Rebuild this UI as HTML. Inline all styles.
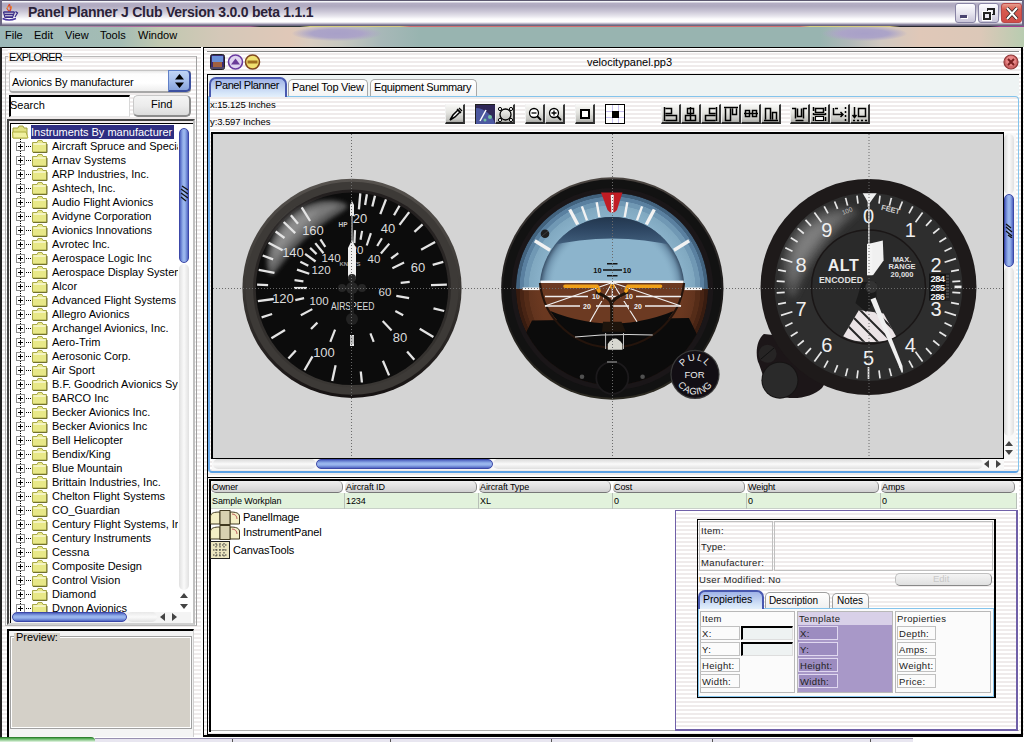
<!DOCTYPE html><html><head><meta charset='utf-8'><style>
*{margin:0;padding:0;box-sizing:border-box}
html,body{width:1024px;height:742px;overflow:hidden;background:#fff}
body{position:relative;font-family:'Liberation Sans',sans-serif;font-size:11px;color:#000}
.a{position:absolute}
.t{position:absolute;white-space:pre;line-height:1}
.stripe{background:repeating-linear-gradient(180deg,#ffffff 0px,#ffffff 2px,#efebeb 2px,#efebeb 4px)}
.btn{position:absolute;width:20px;height:20px;background:linear-gradient(180deg,#f6f6f4 0%,#e4e4e0 45%,#c4c4c0 85%,#a8a8a4 100%);border-right:2px solid #383838;border-bottom:2px solid #282828;border-left:1px solid #f0f0f0;border-top:1px solid #f8f8f8}
</style></head><body><div class='a' style='left:0;top:0;width:1024px;height:26px;background:linear-gradient(180deg,#5c5870 0px,#5c5870 1px,#f4f4f8 1px,#f4f4f8 2px,#b4aec4 3px,#b0aac0 6px,#c8c4d4 11px,#e6e4ec 16px,#fcfcfd 19px,#ffffff 22px,#c0bccc 23.5px,#8c88a0 24.5px,#5c5870 26px);'></div><div class='a' style='left:0;top:0;width:2px;height:26px;background:#6c6884'></div><div class='a' style='left:1022px;top:0;width:2px;height:26px;background:#6c6884'></div><svg class='a' style='left:0;top:0' width='22' height='22' viewBox='0 0 22 22'>
<path d='M9.5 4 L7 8.5 L9 11.5 M9.5 4 L10.5 9 L9.5 11.5 M11.5 6.5 L10.5 10 L10 11.5' stroke='#d84830' stroke-width='1.2' fill='none'/>
<path d='M8 6 L7 9 M11.5 6 L11 9' stroke='#f0a030' stroke-width='0.8' fill='none'/>
<path d='M3.5 12 L14.5 12 M4.5 14.5 L13.5 14.5 M5.5 17 L12.5 17' stroke='#3a2c88' stroke-width='1.5' fill='none'/>
<path d='M3.5 12 L5 17.5 L12.5 17.5 L14.5 12' stroke='#3a2c88' stroke-width='1.2' fill='none'/>
<path d='M15.5 11.5 L17.5 13 L15 17' stroke='#3a2c88' stroke-width='1.3' fill='none'/>
<path d='M2.5 18.5 Q9 21.5 16 18.5' stroke='#4a38a0' stroke-width='1.4' fill='none'/>
</svg><div class='t' style='left:28px;top:5px;font-size:14px;letter-spacing:-0.25px;font-weight:bold;color:#2a2238'>Panel Planner J Club Version 3.0.0 beta 1.1.1</div><div class='a' style='left:955px;top:3px;width:21px;height:20px;border:1px solid #8884a4;border-radius:3px;background:linear-gradient(180deg,#fdfdff 0%,#e8e6f0 50%,#c8c4d8 100%)'><div class='a' style='left:4px;top:11px;width:7px;height:3px;background:#4a4470;box-shadow:1px 1px 0 #fff'></div></div><div class='a' style='left:978px;top:3px;width:21px;height:20px;border:1px solid #8884a4;border-radius:3px;background:linear-gradient(180deg,#fdfdff 0%,#e8e6f0 50%,#c8c4d8 100%)'><div class='a' style='left:8px;top:4px;width:8px;height:7px;border:2px solid #222;border-left-width:1px;border-bottom-width:1px'></div><div class='a' style='left:4px;top:8px;width:8px;height:8px;border:2px solid #222;background:#e8e6f0;box-shadow:0 0 0 1px #fff'></div></div><div class='a' style='left:1001px;top:3px;width:21px;height:20px;border:1px solid #b84848;border-radius:3px;background:linear-gradient(180deg,#e8a090 0%,#d85c50 30%,#d04c48 100%)'><svg class='a' style='left:3px;top:3px' width='14' height='13'><path d='M2 1 L12 12 M12 1 L2 12' stroke='#222' stroke-width='3.4'/><path d='M2 1 L12 12 M12 1 L2 12' stroke='#fff' stroke-width='2'/></svg></div><div class='a' style='left:0;top:26px;width:1024px;height:21px;background:linear-gradient(90deg,#9cb8b8 0px,#a4bcb4 120px,#c0c8b0 160px,#d4c8b8 220px,#e0c8b8 290px,#d8ccc0 310px,#c8c8c0 340px,#a8b8b8 380px,#98b4b0 420px,#98b4b0 820px,#b0b8b8 850px,#d0c8c0 880px,#e0c8b8 920px,#dcc8b8 980px,#b8ccb0 1024px)'></div><div class='a' style='left:292px;top:26px;width:90px;height:15px;border-radius:50%;background:radial-gradient(ellipse at center,#a8a0c8 0%,#aca4c8 40%,rgba(168,160,200,0) 72%)'></div><div class='a' style='left:822px;top:26px;width:85px;height:15px;border-radius:50%;background:radial-gradient(ellipse at center,#a8a0c8 0%,#aca4c8 40%,rgba(168,160,200,0) 72%)'></div><div class='a' style='left:0;top:26px;width:1024px;height:1px;background:linear-gradient(90deg,#a0b0b0 0px,#b070a0 130px,#a05890 250px,#303838 260px,#303838 300px,#d8d080 310px,#d8c880 400px,#d07070 410px,#d07070 800px,#d8d080 810px,#d8c880 890px,#282830 900px,#282830 990px,#a04090 1000px,#a04090 1024px)'></div><div class='t' style='left:5px;top:30px;font-size:11px;color:#000'>File</div><div class='t' style='left:34px;top:30px;font-size:11px;color:#000'>Edit</div><div class='t' style='left:65px;top:30px;font-size:11px;color:#000'>View</div><div class='t' style='left:100px;top:30px;font-size:11px;color:#000'>Tools</div><div class='t' style='left:138px;top:30px;font-size:11px;color:#000'>Window</div><div class='a stripe' style='left:0;top:47px;width:203px;height:695px'></div><div class='a' style='left:0;top:47px;width:201px;height:1px;background:#000'></div><div class='a' style='left:0;top:47px;width:2px;height:690px;background:#222'></div><div class='a' style='left:201px;top:47px;width:2px;height:695px;background:#fff'></div><div class='a' style='left:5px;top:56px;width:192px;height:570px;border:1px solid #b8b8b8;border-right-color:#a0a0a0'></div><div class='a stripe' style='left:8px;top:50px;width:55px;height:12px'></div><div class='t' style='left:9px;top:52px;font-size:11px;letter-spacing:-0.9px;color:#000'>EXPLORER</div><div class='a' style='left:9px;top:70px;width:182px;height:23px;border-radius:4px;background:linear-gradient(180deg,#e8e8e8 0,#fdfdfd 3px,#ffffff 60%,#eeeeee 100%);border:1px solid #c4c4c4;border-bottom:2px solid #a8a8a8;border-right:2px solid #909090'></div><div class='a' style='left:168px;top:70px;width:23px;height:22px;border-radius:0 5px 5px 0;background:linear-gradient(180deg,#c0d4f4 0%,#a8c0ec 50%,#88a4dc 100%);border:1px solid #6080c8;border-right:2px solid #3c50a0;border-bottom:2px solid #3c50a0'></div><svg class='a' style='left:174px;top:73px' width='11' height='16'><path d='M5.5 1 L10 6.5 L1 6.5 Z M1 9.5 L10 9.5 L5.5 15 Z' fill='#000'/></svg><div class='t' style='left:12px;top:77px;font-size:11px;letter-spacing:-0.12px'>Avionics By manufacturer</div><div class='a' style='left:9px;top:95px;width:121px;height:22px;background:#fff;border-top:2px solid #000;border-left:2px solid #000;border-right:1px solid #d8d8d8;border-bottom:1px solid #e8e8e8'></div><div class='t' style='left:10px;top:100px;font-size:11px'>Search</div><div class='a' style='left:133px;top:95px;width:58px;height:22px;border-radius:5px;background:linear-gradient(180deg,#f4f4f4 0%,#ececec 50%,#dcdcdc 100%);border:1px solid #c8c8c8;border-right:2px solid #8c8c8c;border-bottom:2px solid #8c8c8c'></div><div class='t' style='left:151px;top:99px;font-size:11px'>Find</div><div class='a' style='left:7px;top:119px;width:188px;height:506px;border:2px solid #444;border-right-color:#c0c0c0;border-bottom-color:#d0d0d0'></div><div class='a' style='left:10px;top:123px;width:183px;height:500px;background:#fff;border-top:1px solid #000;border-left:1px solid #000'></div><svg class='a' style='left:12px;top:125px' width='17' height='14'><path d='M1 3 L6 3 L7 1 L11 1 L12 3 L15 3 L15 13 L1 13 Z' fill='#e0e080' stroke='#a0a040'/><path d='M0.5 7 L14 7 L16 13 L1 13 Z' fill='#f0f0a0' stroke='#b0b040'/></svg><div class='a' style='left:31px;top:125px;width:143px;height:14px;background:#2e2e82'></div><div class='t' style='left:31px;top:127px;font-size:11px;color:#fff'>Instruments By manufacturer</div><div class='a' style='left:11px;top:124px;width:167px;height:488px;overflow:hidden'><div class='a' style='left:9px;top:15px;width:1px;height:480px;background:repeating-linear-gradient(180deg,#000 0,#000 1px,transparent 1px,transparent 2px)'></div><div class='a' style='left:5px;top:18px;width:9px;height:9px;border:1px solid #909090;background:#fff'></div><div class='a' style='left:7px;top:22px;width:5px;height:1px;background:#000'></div><div class='a' style='left:9px;top:20px;width:1px;height:5px;background:#000'></div><div class='a' style='left:15px;top:22px;width:6px;height:1px;background:repeating-linear-gradient(90deg,#000 0,#000 1px,transparent 1px,transparent 2px)'></div><svg class='a' style='left:21px;top:16px' width='16' height='13'><path d='M0.5 2.5 L5 2.5 L6 0.5 L10 0.5 L11 2.5 L14.5 2.5 L14.5 12 L0.5 12 Z' fill='#e8e888' stroke='#a8a848'/><path d='M1.5 4 L13.5 4' stroke='#fff' stroke-width='1'/><path d='M15 4 L15 12.5 L1 12.5' stroke='#707030' fill='none'/></svg><div class='t' style='left:41px;top:17px;font-size:11px'>Aircraft Spruce and Specia</div><div class='a' style='left:5px;top:32px;width:9px;height:9px;border:1px solid #909090;background:#fff'></div><div class='a' style='left:7px;top:36px;width:5px;height:1px;background:#000'></div><div class='a' style='left:9px;top:34px;width:1px;height:5px;background:#000'></div><div class='a' style='left:15px;top:36px;width:6px;height:1px;background:repeating-linear-gradient(90deg,#000 0,#000 1px,transparent 1px,transparent 2px)'></div><svg class='a' style='left:21px;top:30px' width='16' height='13'><path d='M0.5 2.5 L5 2.5 L6 0.5 L10 0.5 L11 2.5 L14.5 2.5 L14.5 12 L0.5 12 Z' fill='#e8e888' stroke='#a8a848'/><path d='M1.5 4 L13.5 4' stroke='#fff' stroke-width='1'/><path d='M15 4 L15 12.5 L1 12.5' stroke='#707030' fill='none'/></svg><div class='t' style='left:41px;top:31px;font-size:11px'>Arnav Systems</div><div class='a' style='left:5px;top:46px;width:9px;height:9px;border:1px solid #909090;background:#fff'></div><div class='a' style='left:7px;top:50px;width:5px;height:1px;background:#000'></div><div class='a' style='left:9px;top:48px;width:1px;height:5px;background:#000'></div><div class='a' style='left:15px;top:50px;width:6px;height:1px;background:repeating-linear-gradient(90deg,#000 0,#000 1px,transparent 1px,transparent 2px)'></div><svg class='a' style='left:21px;top:44px' width='16' height='13'><path d='M0.5 2.5 L5 2.5 L6 0.5 L10 0.5 L11 2.5 L14.5 2.5 L14.5 12 L0.5 12 Z' fill='#e8e888' stroke='#a8a848'/><path d='M1.5 4 L13.5 4' stroke='#fff' stroke-width='1'/><path d='M15 4 L15 12.5 L1 12.5' stroke='#707030' fill='none'/></svg><div class='t' style='left:41px;top:45px;font-size:11px'>ARP Industries, Inc.</div><div class='a' style='left:5px;top:60px;width:9px;height:9px;border:1px solid #909090;background:#fff'></div><div class='a' style='left:7px;top:64px;width:5px;height:1px;background:#000'></div><div class='a' style='left:9px;top:62px;width:1px;height:5px;background:#000'></div><div class='a' style='left:15px;top:64px;width:6px;height:1px;background:repeating-linear-gradient(90deg,#000 0,#000 1px,transparent 1px,transparent 2px)'></div><svg class='a' style='left:21px;top:58px' width='16' height='13'><path d='M0.5 2.5 L5 2.5 L6 0.5 L10 0.5 L11 2.5 L14.5 2.5 L14.5 12 L0.5 12 Z' fill='#e8e888' stroke='#a8a848'/><path d='M1.5 4 L13.5 4' stroke='#fff' stroke-width='1'/><path d='M15 4 L15 12.5 L1 12.5' stroke='#707030' fill='none'/></svg><div class='t' style='left:41px;top:59px;font-size:11px'>Ashtech, Inc.</div><div class='a' style='left:5px;top:74px;width:9px;height:9px;border:1px solid #909090;background:#fff'></div><div class='a' style='left:7px;top:78px;width:5px;height:1px;background:#000'></div><div class='a' style='left:9px;top:76px;width:1px;height:5px;background:#000'></div><div class='a' style='left:15px;top:78px;width:6px;height:1px;background:repeating-linear-gradient(90deg,#000 0,#000 1px,transparent 1px,transparent 2px)'></div><svg class='a' style='left:21px;top:72px' width='16' height='13'><path d='M0.5 2.5 L5 2.5 L6 0.5 L10 0.5 L11 2.5 L14.5 2.5 L14.5 12 L0.5 12 Z' fill='#e8e888' stroke='#a8a848'/><path d='M1.5 4 L13.5 4' stroke='#fff' stroke-width='1'/><path d='M15 4 L15 12.5 L1 12.5' stroke='#707030' fill='none'/></svg><div class='t' style='left:41px;top:73px;font-size:11px'>Audio Flight Avionics</div><div class='a' style='left:5px;top:88px;width:9px;height:9px;border:1px solid #909090;background:#fff'></div><div class='a' style='left:7px;top:92px;width:5px;height:1px;background:#000'></div><div class='a' style='left:9px;top:90px;width:1px;height:5px;background:#000'></div><div class='a' style='left:15px;top:92px;width:6px;height:1px;background:repeating-linear-gradient(90deg,#000 0,#000 1px,transparent 1px,transparent 2px)'></div><svg class='a' style='left:21px;top:86px' width='16' height='13'><path d='M0.5 2.5 L5 2.5 L6 0.5 L10 0.5 L11 2.5 L14.5 2.5 L14.5 12 L0.5 12 Z' fill='#e8e888' stroke='#a8a848'/><path d='M1.5 4 L13.5 4' stroke='#fff' stroke-width='1'/><path d='M15 4 L15 12.5 L1 12.5' stroke='#707030' fill='none'/></svg><div class='t' style='left:41px;top:87px;font-size:11px'>Avidyne Corporation</div><div class='a' style='left:5px;top:102px;width:9px;height:9px;border:1px solid #909090;background:#fff'></div><div class='a' style='left:7px;top:106px;width:5px;height:1px;background:#000'></div><div class='a' style='left:9px;top:104px;width:1px;height:5px;background:#000'></div><div class='a' style='left:15px;top:106px;width:6px;height:1px;background:repeating-linear-gradient(90deg,#000 0,#000 1px,transparent 1px,transparent 2px)'></div><svg class='a' style='left:21px;top:100px' width='16' height='13'><path d='M0.5 2.5 L5 2.5 L6 0.5 L10 0.5 L11 2.5 L14.5 2.5 L14.5 12 L0.5 12 Z' fill='#e8e888' stroke='#a8a848'/><path d='M1.5 4 L13.5 4' stroke='#fff' stroke-width='1'/><path d='M15 4 L15 12.5 L1 12.5' stroke='#707030' fill='none'/></svg><div class='t' style='left:41px;top:101px;font-size:11px'>Avionics Innovations</div><div class='a' style='left:5px;top:116px;width:9px;height:9px;border:1px solid #909090;background:#fff'></div><div class='a' style='left:7px;top:120px;width:5px;height:1px;background:#000'></div><div class='a' style='left:9px;top:118px;width:1px;height:5px;background:#000'></div><div class='a' style='left:15px;top:120px;width:6px;height:1px;background:repeating-linear-gradient(90deg,#000 0,#000 1px,transparent 1px,transparent 2px)'></div><svg class='a' style='left:21px;top:114px' width='16' height='13'><path d='M0.5 2.5 L5 2.5 L6 0.5 L10 0.5 L11 2.5 L14.5 2.5 L14.5 12 L0.5 12 Z' fill='#e8e888' stroke='#a8a848'/><path d='M1.5 4 L13.5 4' stroke='#fff' stroke-width='1'/><path d='M15 4 L15 12.5 L1 12.5' stroke='#707030' fill='none'/></svg><div class='t' style='left:41px;top:115px;font-size:11px'>Avrotec Inc.</div><div class='a' style='left:5px;top:130px;width:9px;height:9px;border:1px solid #909090;background:#fff'></div><div class='a' style='left:7px;top:134px;width:5px;height:1px;background:#000'></div><div class='a' style='left:9px;top:132px;width:1px;height:5px;background:#000'></div><div class='a' style='left:15px;top:134px;width:6px;height:1px;background:repeating-linear-gradient(90deg,#000 0,#000 1px,transparent 1px,transparent 2px)'></div><svg class='a' style='left:21px;top:128px' width='16' height='13'><path d='M0.5 2.5 L5 2.5 L6 0.5 L10 0.5 L11 2.5 L14.5 2.5 L14.5 12 L0.5 12 Z' fill='#e8e888' stroke='#a8a848'/><path d='M1.5 4 L13.5 4' stroke='#fff' stroke-width='1'/><path d='M15 4 L15 12.5 L1 12.5' stroke='#707030' fill='none'/></svg><div class='t' style='left:41px;top:129px;font-size:11px'>Aerospace Logic Inc</div><div class='a' style='left:5px;top:144px;width:9px;height:9px;border:1px solid #909090;background:#fff'></div><div class='a' style='left:7px;top:148px;width:5px;height:1px;background:#000'></div><div class='a' style='left:9px;top:146px;width:1px;height:5px;background:#000'></div><div class='a' style='left:15px;top:148px;width:6px;height:1px;background:repeating-linear-gradient(90deg,#000 0,#000 1px,transparent 1px,transparent 2px)'></div><svg class='a' style='left:21px;top:142px' width='16' height='13'><path d='M0.5 2.5 L5 2.5 L6 0.5 L10 0.5 L11 2.5 L14.5 2.5 L14.5 12 L0.5 12 Z' fill='#e8e888' stroke='#a8a848'/><path d='M1.5 4 L13.5 4' stroke='#fff' stroke-width='1'/><path d='M15 4 L15 12.5 L1 12.5' stroke='#707030' fill='none'/></svg><div class='t' style='left:41px;top:143px;font-size:11px'>Aerospace Display Systems</div><div class='a' style='left:5px;top:158px;width:9px;height:9px;border:1px solid #909090;background:#fff'></div><div class='a' style='left:7px;top:162px;width:5px;height:1px;background:#000'></div><div class='a' style='left:9px;top:160px;width:1px;height:5px;background:#000'></div><div class='a' style='left:15px;top:162px;width:6px;height:1px;background:repeating-linear-gradient(90deg,#000 0,#000 1px,transparent 1px,transparent 2px)'></div><svg class='a' style='left:21px;top:156px' width='16' height='13'><path d='M0.5 2.5 L5 2.5 L6 0.5 L10 0.5 L11 2.5 L14.5 2.5 L14.5 12 L0.5 12 Z' fill='#e8e888' stroke='#a8a848'/><path d='M1.5 4 L13.5 4' stroke='#fff' stroke-width='1'/><path d='M15 4 L15 12.5 L1 12.5' stroke='#707030' fill='none'/></svg><div class='t' style='left:41px;top:157px;font-size:11px'>Alcor</div><div class='a' style='left:5px;top:172px;width:9px;height:9px;border:1px solid #909090;background:#fff'></div><div class='a' style='left:7px;top:176px;width:5px;height:1px;background:#000'></div><div class='a' style='left:9px;top:174px;width:1px;height:5px;background:#000'></div><div class='a' style='left:15px;top:176px;width:6px;height:1px;background:repeating-linear-gradient(90deg,#000 0,#000 1px,transparent 1px,transparent 2px)'></div><svg class='a' style='left:21px;top:170px' width='16' height='13'><path d='M0.5 2.5 L5 2.5 L6 0.5 L10 0.5 L11 2.5 L14.5 2.5 L14.5 12 L0.5 12 Z' fill='#e8e888' stroke='#a8a848'/><path d='M1.5 4 L13.5 4' stroke='#fff' stroke-width='1'/><path d='M15 4 L15 12.5 L1 12.5' stroke='#707030' fill='none'/></svg><div class='t' style='left:41px;top:171px;font-size:11px'>Advanced Flight Systems</div><div class='a' style='left:5px;top:186px;width:9px;height:9px;border:1px solid #909090;background:#fff'></div><div class='a' style='left:7px;top:190px;width:5px;height:1px;background:#000'></div><div class='a' style='left:9px;top:188px;width:1px;height:5px;background:#000'></div><div class='a' style='left:15px;top:190px;width:6px;height:1px;background:repeating-linear-gradient(90deg,#000 0,#000 1px,transparent 1px,transparent 2px)'></div><svg class='a' style='left:21px;top:184px' width='16' height='13'><path d='M0.5 2.5 L5 2.5 L6 0.5 L10 0.5 L11 2.5 L14.5 2.5 L14.5 12 L0.5 12 Z' fill='#e8e888' stroke='#a8a848'/><path d='M1.5 4 L13.5 4' stroke='#fff' stroke-width='1'/><path d='M15 4 L15 12.5 L1 12.5' stroke='#707030' fill='none'/></svg><div class='t' style='left:41px;top:185px;font-size:11px'>Allegro Avionics</div><div class='a' style='left:5px;top:200px;width:9px;height:9px;border:1px solid #909090;background:#fff'></div><div class='a' style='left:7px;top:204px;width:5px;height:1px;background:#000'></div><div class='a' style='left:9px;top:202px;width:1px;height:5px;background:#000'></div><div class='a' style='left:15px;top:204px;width:6px;height:1px;background:repeating-linear-gradient(90deg,#000 0,#000 1px,transparent 1px,transparent 2px)'></div><svg class='a' style='left:21px;top:198px' width='16' height='13'><path d='M0.5 2.5 L5 2.5 L6 0.5 L10 0.5 L11 2.5 L14.5 2.5 L14.5 12 L0.5 12 Z' fill='#e8e888' stroke='#a8a848'/><path d='M1.5 4 L13.5 4' stroke='#fff' stroke-width='1'/><path d='M15 4 L15 12.5 L1 12.5' stroke='#707030' fill='none'/></svg><div class='t' style='left:41px;top:199px;font-size:11px'>Archangel Avionics, Inc.</div><div class='a' style='left:5px;top:214px;width:9px;height:9px;border:1px solid #909090;background:#fff'></div><div class='a' style='left:7px;top:218px;width:5px;height:1px;background:#000'></div><div class='a' style='left:9px;top:216px;width:1px;height:5px;background:#000'></div><div class='a' style='left:15px;top:218px;width:6px;height:1px;background:repeating-linear-gradient(90deg,#000 0,#000 1px,transparent 1px,transparent 2px)'></div><svg class='a' style='left:21px;top:212px' width='16' height='13'><path d='M0.5 2.5 L5 2.5 L6 0.5 L10 0.5 L11 2.5 L14.5 2.5 L14.5 12 L0.5 12 Z' fill='#e8e888' stroke='#a8a848'/><path d='M1.5 4 L13.5 4' stroke='#fff' stroke-width='1'/><path d='M15 4 L15 12.5 L1 12.5' stroke='#707030' fill='none'/></svg><div class='t' style='left:41px;top:213px;font-size:11px'>Aero-Trim</div><div class='a' style='left:5px;top:228px;width:9px;height:9px;border:1px solid #909090;background:#fff'></div><div class='a' style='left:7px;top:232px;width:5px;height:1px;background:#000'></div><div class='a' style='left:9px;top:230px;width:1px;height:5px;background:#000'></div><div class='a' style='left:15px;top:232px;width:6px;height:1px;background:repeating-linear-gradient(90deg,#000 0,#000 1px,transparent 1px,transparent 2px)'></div><svg class='a' style='left:21px;top:226px' width='16' height='13'><path d='M0.5 2.5 L5 2.5 L6 0.5 L10 0.5 L11 2.5 L14.5 2.5 L14.5 12 L0.5 12 Z' fill='#e8e888' stroke='#a8a848'/><path d='M1.5 4 L13.5 4' stroke='#fff' stroke-width='1'/><path d='M15 4 L15 12.5 L1 12.5' stroke='#707030' fill='none'/></svg><div class='t' style='left:41px;top:227px;font-size:11px'>Aerosonic Corp.</div><div class='a' style='left:5px;top:242px;width:9px;height:9px;border:1px solid #909090;background:#fff'></div><div class='a' style='left:7px;top:246px;width:5px;height:1px;background:#000'></div><div class='a' style='left:9px;top:244px;width:1px;height:5px;background:#000'></div><div class='a' style='left:15px;top:246px;width:6px;height:1px;background:repeating-linear-gradient(90deg,#000 0,#000 1px,transparent 1px,transparent 2px)'></div><svg class='a' style='left:21px;top:240px' width='16' height='13'><path d='M0.5 2.5 L5 2.5 L6 0.5 L10 0.5 L11 2.5 L14.5 2.5 L14.5 12 L0.5 12 Z' fill='#e8e888' stroke='#a8a848'/><path d='M1.5 4 L13.5 4' stroke='#fff' stroke-width='1'/><path d='M15 4 L15 12.5 L1 12.5' stroke='#707030' fill='none'/></svg><div class='t' style='left:41px;top:241px;font-size:11px'>Air Sport</div><div class='a' style='left:5px;top:256px;width:9px;height:9px;border:1px solid #909090;background:#fff'></div><div class='a' style='left:7px;top:260px;width:5px;height:1px;background:#000'></div><div class='a' style='left:9px;top:258px;width:1px;height:5px;background:#000'></div><div class='a' style='left:15px;top:260px;width:6px;height:1px;background:repeating-linear-gradient(90deg,#000 0,#000 1px,transparent 1px,transparent 2px)'></div><svg class='a' style='left:21px;top:254px' width='16' height='13'><path d='M0.5 2.5 L5 2.5 L6 0.5 L10 0.5 L11 2.5 L14.5 2.5 L14.5 12 L0.5 12 Z' fill='#e8e888' stroke='#a8a848'/><path d='M1.5 4 L13.5 4' stroke='#fff' stroke-width='1'/><path d='M15 4 L15 12.5 L1 12.5' stroke='#707030' fill='none'/></svg><div class='t' style='left:41px;top:255px;font-size:11px'>B.F. Goodrich Avionics Sys</div><div class='a' style='left:5px;top:270px;width:9px;height:9px;border:1px solid #909090;background:#fff'></div><div class='a' style='left:7px;top:274px;width:5px;height:1px;background:#000'></div><div class='a' style='left:9px;top:272px;width:1px;height:5px;background:#000'></div><div class='a' style='left:15px;top:274px;width:6px;height:1px;background:repeating-linear-gradient(90deg,#000 0,#000 1px,transparent 1px,transparent 2px)'></div><svg class='a' style='left:21px;top:268px' width='16' height='13'><path d='M0.5 2.5 L5 2.5 L6 0.5 L10 0.5 L11 2.5 L14.5 2.5 L14.5 12 L0.5 12 Z' fill='#e8e888' stroke='#a8a848'/><path d='M1.5 4 L13.5 4' stroke='#fff' stroke-width='1'/><path d='M15 4 L15 12.5 L1 12.5' stroke='#707030' fill='none'/></svg><div class='t' style='left:41px;top:269px;font-size:11px'>BARCO Inc</div><div class='a' style='left:5px;top:284px;width:9px;height:9px;border:1px solid #909090;background:#fff'></div><div class='a' style='left:7px;top:288px;width:5px;height:1px;background:#000'></div><div class='a' style='left:9px;top:286px;width:1px;height:5px;background:#000'></div><div class='a' style='left:15px;top:288px;width:6px;height:1px;background:repeating-linear-gradient(90deg,#000 0,#000 1px,transparent 1px,transparent 2px)'></div><svg class='a' style='left:21px;top:282px' width='16' height='13'><path d='M0.5 2.5 L5 2.5 L6 0.5 L10 0.5 L11 2.5 L14.5 2.5 L14.5 12 L0.5 12 Z' fill='#e8e888' stroke='#a8a848'/><path d='M1.5 4 L13.5 4' stroke='#fff' stroke-width='1'/><path d='M15 4 L15 12.5 L1 12.5' stroke='#707030' fill='none'/></svg><div class='t' style='left:41px;top:283px;font-size:11px'>Becker Avionics Inc.</div><div class='a' style='left:5px;top:298px;width:9px;height:9px;border:1px solid #909090;background:#fff'></div><div class='a' style='left:7px;top:302px;width:5px;height:1px;background:#000'></div><div class='a' style='left:9px;top:300px;width:1px;height:5px;background:#000'></div><div class='a' style='left:15px;top:302px;width:6px;height:1px;background:repeating-linear-gradient(90deg,#000 0,#000 1px,transparent 1px,transparent 2px)'></div><svg class='a' style='left:21px;top:296px' width='16' height='13'><path d='M0.5 2.5 L5 2.5 L6 0.5 L10 0.5 L11 2.5 L14.5 2.5 L14.5 12 L0.5 12 Z' fill='#e8e888' stroke='#a8a848'/><path d='M1.5 4 L13.5 4' stroke='#fff' stroke-width='1'/><path d='M15 4 L15 12.5 L1 12.5' stroke='#707030' fill='none'/></svg><div class='t' style='left:41px;top:297px;font-size:11px'>Becker Avionics Inc</div><div class='a' style='left:5px;top:312px;width:9px;height:9px;border:1px solid #909090;background:#fff'></div><div class='a' style='left:7px;top:316px;width:5px;height:1px;background:#000'></div><div class='a' style='left:9px;top:314px;width:1px;height:5px;background:#000'></div><div class='a' style='left:15px;top:316px;width:6px;height:1px;background:repeating-linear-gradient(90deg,#000 0,#000 1px,transparent 1px,transparent 2px)'></div><svg class='a' style='left:21px;top:310px' width='16' height='13'><path d='M0.5 2.5 L5 2.5 L6 0.5 L10 0.5 L11 2.5 L14.5 2.5 L14.5 12 L0.5 12 Z' fill='#e8e888' stroke='#a8a848'/><path d='M1.5 4 L13.5 4' stroke='#fff' stroke-width='1'/><path d='M15 4 L15 12.5 L1 12.5' stroke='#707030' fill='none'/></svg><div class='t' style='left:41px;top:311px;font-size:11px'>Bell Helicopter</div><div class='a' style='left:5px;top:326px;width:9px;height:9px;border:1px solid #909090;background:#fff'></div><div class='a' style='left:7px;top:330px;width:5px;height:1px;background:#000'></div><div class='a' style='left:9px;top:328px;width:1px;height:5px;background:#000'></div><div class='a' style='left:15px;top:330px;width:6px;height:1px;background:repeating-linear-gradient(90deg,#000 0,#000 1px,transparent 1px,transparent 2px)'></div><svg class='a' style='left:21px;top:324px' width='16' height='13'><path d='M0.5 2.5 L5 2.5 L6 0.5 L10 0.5 L11 2.5 L14.5 2.5 L14.5 12 L0.5 12 Z' fill='#e8e888' stroke='#a8a848'/><path d='M1.5 4 L13.5 4' stroke='#fff' stroke-width='1'/><path d='M15 4 L15 12.5 L1 12.5' stroke='#707030' fill='none'/></svg><div class='t' style='left:41px;top:325px;font-size:11px'>Bendix/King</div><div class='a' style='left:5px;top:340px;width:9px;height:9px;border:1px solid #909090;background:#fff'></div><div class='a' style='left:7px;top:344px;width:5px;height:1px;background:#000'></div><div class='a' style='left:9px;top:342px;width:1px;height:5px;background:#000'></div><div class='a' style='left:15px;top:344px;width:6px;height:1px;background:repeating-linear-gradient(90deg,#000 0,#000 1px,transparent 1px,transparent 2px)'></div><svg class='a' style='left:21px;top:338px' width='16' height='13'><path d='M0.5 2.5 L5 2.5 L6 0.5 L10 0.5 L11 2.5 L14.5 2.5 L14.5 12 L0.5 12 Z' fill='#e8e888' stroke='#a8a848'/><path d='M1.5 4 L13.5 4' stroke='#fff' stroke-width='1'/><path d='M15 4 L15 12.5 L1 12.5' stroke='#707030' fill='none'/></svg><div class='t' style='left:41px;top:339px;font-size:11px'>Blue Mountain</div><div class='a' style='left:5px;top:354px;width:9px;height:9px;border:1px solid #909090;background:#fff'></div><div class='a' style='left:7px;top:358px;width:5px;height:1px;background:#000'></div><div class='a' style='left:9px;top:356px;width:1px;height:5px;background:#000'></div><div class='a' style='left:15px;top:358px;width:6px;height:1px;background:repeating-linear-gradient(90deg,#000 0,#000 1px,transparent 1px,transparent 2px)'></div><svg class='a' style='left:21px;top:352px' width='16' height='13'><path d='M0.5 2.5 L5 2.5 L6 0.5 L10 0.5 L11 2.5 L14.5 2.5 L14.5 12 L0.5 12 Z' fill='#e8e888' stroke='#a8a848'/><path d='M1.5 4 L13.5 4' stroke='#fff' stroke-width='1'/><path d='M15 4 L15 12.5 L1 12.5' stroke='#707030' fill='none'/></svg><div class='t' style='left:41px;top:353px;font-size:11px'>Brittain Industries, Inc.</div><div class='a' style='left:5px;top:368px;width:9px;height:9px;border:1px solid #909090;background:#fff'></div><div class='a' style='left:7px;top:372px;width:5px;height:1px;background:#000'></div><div class='a' style='left:9px;top:370px;width:1px;height:5px;background:#000'></div><div class='a' style='left:15px;top:372px;width:6px;height:1px;background:repeating-linear-gradient(90deg,#000 0,#000 1px,transparent 1px,transparent 2px)'></div><svg class='a' style='left:21px;top:366px' width='16' height='13'><path d='M0.5 2.5 L5 2.5 L6 0.5 L10 0.5 L11 2.5 L14.5 2.5 L14.5 12 L0.5 12 Z' fill='#e8e888' stroke='#a8a848'/><path d='M1.5 4 L13.5 4' stroke='#fff' stroke-width='1'/><path d='M15 4 L15 12.5 L1 12.5' stroke='#707030' fill='none'/></svg><div class='t' style='left:41px;top:367px;font-size:11px'>Chelton Flight Systems</div><div class='a' style='left:5px;top:382px;width:9px;height:9px;border:1px solid #909090;background:#fff'></div><div class='a' style='left:7px;top:386px;width:5px;height:1px;background:#000'></div><div class='a' style='left:9px;top:384px;width:1px;height:5px;background:#000'></div><div class='a' style='left:15px;top:386px;width:6px;height:1px;background:repeating-linear-gradient(90deg,#000 0,#000 1px,transparent 1px,transparent 2px)'></div><svg class='a' style='left:21px;top:380px' width='16' height='13'><path d='M0.5 2.5 L5 2.5 L6 0.5 L10 0.5 L11 2.5 L14.5 2.5 L14.5 12 L0.5 12 Z' fill='#e8e888' stroke='#a8a848'/><path d='M1.5 4 L13.5 4' stroke='#fff' stroke-width='1'/><path d='M15 4 L15 12.5 L1 12.5' stroke='#707030' fill='none'/></svg><div class='t' style='left:41px;top:381px;font-size:11px'>CO_Guardian</div><div class='a' style='left:5px;top:396px;width:9px;height:9px;border:1px solid #909090;background:#fff'></div><div class='a' style='left:7px;top:400px;width:5px;height:1px;background:#000'></div><div class='a' style='left:9px;top:398px;width:1px;height:5px;background:#000'></div><div class='a' style='left:15px;top:400px;width:6px;height:1px;background:repeating-linear-gradient(90deg,#000 0,#000 1px,transparent 1px,transparent 2px)'></div><svg class='a' style='left:21px;top:394px' width='16' height='13'><path d='M0.5 2.5 L5 2.5 L6 0.5 L10 0.5 L11 2.5 L14.5 2.5 L14.5 12 L0.5 12 Z' fill='#e8e888' stroke='#a8a848'/><path d='M1.5 4 L13.5 4' stroke='#fff' stroke-width='1'/><path d='M15 4 L15 12.5 L1 12.5' stroke='#707030' fill='none'/></svg><div class='t' style='left:41px;top:395px;font-size:11px'>Century Flight Systems, In</div><div class='a' style='left:5px;top:410px;width:9px;height:9px;border:1px solid #909090;background:#fff'></div><div class='a' style='left:7px;top:414px;width:5px;height:1px;background:#000'></div><div class='a' style='left:9px;top:412px;width:1px;height:5px;background:#000'></div><div class='a' style='left:15px;top:414px;width:6px;height:1px;background:repeating-linear-gradient(90deg,#000 0,#000 1px,transparent 1px,transparent 2px)'></div><svg class='a' style='left:21px;top:408px' width='16' height='13'><path d='M0.5 2.5 L5 2.5 L6 0.5 L10 0.5 L11 2.5 L14.5 2.5 L14.5 12 L0.5 12 Z' fill='#e8e888' stroke='#a8a848'/><path d='M1.5 4 L13.5 4' stroke='#fff' stroke-width='1'/><path d='M15 4 L15 12.5 L1 12.5' stroke='#707030' fill='none'/></svg><div class='t' style='left:41px;top:409px;font-size:11px'>Century Instruments</div><div class='a' style='left:5px;top:424px;width:9px;height:9px;border:1px solid #909090;background:#fff'></div><div class='a' style='left:7px;top:428px;width:5px;height:1px;background:#000'></div><div class='a' style='left:9px;top:426px;width:1px;height:5px;background:#000'></div><div class='a' style='left:15px;top:428px;width:6px;height:1px;background:repeating-linear-gradient(90deg,#000 0,#000 1px,transparent 1px,transparent 2px)'></div><svg class='a' style='left:21px;top:422px' width='16' height='13'><path d='M0.5 2.5 L5 2.5 L6 0.5 L10 0.5 L11 2.5 L14.5 2.5 L14.5 12 L0.5 12 Z' fill='#e8e888' stroke='#a8a848'/><path d='M1.5 4 L13.5 4' stroke='#fff' stroke-width='1'/><path d='M15 4 L15 12.5 L1 12.5' stroke='#707030' fill='none'/></svg><div class='t' style='left:41px;top:423px;font-size:11px'>Cessna</div><div class='a' style='left:5px;top:438px;width:9px;height:9px;border:1px solid #909090;background:#fff'></div><div class='a' style='left:7px;top:442px;width:5px;height:1px;background:#000'></div><div class='a' style='left:9px;top:440px;width:1px;height:5px;background:#000'></div><div class='a' style='left:15px;top:442px;width:6px;height:1px;background:repeating-linear-gradient(90deg,#000 0,#000 1px,transparent 1px,transparent 2px)'></div><svg class='a' style='left:21px;top:436px' width='16' height='13'><path d='M0.5 2.5 L5 2.5 L6 0.5 L10 0.5 L11 2.5 L14.5 2.5 L14.5 12 L0.5 12 Z' fill='#e8e888' stroke='#a8a848'/><path d='M1.5 4 L13.5 4' stroke='#fff' stroke-width='1'/><path d='M15 4 L15 12.5 L1 12.5' stroke='#707030' fill='none'/></svg><div class='t' style='left:41px;top:437px;font-size:11px'>Composite Design</div><div class='a' style='left:5px;top:452px;width:9px;height:9px;border:1px solid #909090;background:#fff'></div><div class='a' style='left:7px;top:456px;width:5px;height:1px;background:#000'></div><div class='a' style='left:9px;top:454px;width:1px;height:5px;background:#000'></div><div class='a' style='left:15px;top:456px;width:6px;height:1px;background:repeating-linear-gradient(90deg,#000 0,#000 1px,transparent 1px,transparent 2px)'></div><svg class='a' style='left:21px;top:450px' width='16' height='13'><path d='M0.5 2.5 L5 2.5 L6 0.5 L10 0.5 L11 2.5 L14.5 2.5 L14.5 12 L0.5 12 Z' fill='#e8e888' stroke='#a8a848'/><path d='M1.5 4 L13.5 4' stroke='#fff' stroke-width='1'/><path d='M15 4 L15 12.5 L1 12.5' stroke='#707030' fill='none'/></svg><div class='t' style='left:41px;top:451px;font-size:11px'>Control Vision</div><div class='a' style='left:5px;top:466px;width:9px;height:9px;border:1px solid #909090;background:#fff'></div><div class='a' style='left:7px;top:470px;width:5px;height:1px;background:#000'></div><div class='a' style='left:9px;top:468px;width:1px;height:5px;background:#000'></div><div class='a' style='left:15px;top:470px;width:6px;height:1px;background:repeating-linear-gradient(90deg,#000 0,#000 1px,transparent 1px,transparent 2px)'></div><svg class='a' style='left:21px;top:464px' width='16' height='13'><path d='M0.5 2.5 L5 2.5 L6 0.5 L10 0.5 L11 2.5 L14.5 2.5 L14.5 12 L0.5 12 Z' fill='#e8e888' stroke='#a8a848'/><path d='M1.5 4 L13.5 4' stroke='#fff' stroke-width='1'/><path d='M15 4 L15 12.5 L1 12.5' stroke='#707030' fill='none'/></svg><div class='t' style='left:41px;top:465px;font-size:11px'>Diamond</div><div class='a' style='left:5px;top:480px;width:9px;height:9px;border:1px solid #909090;background:#fff'></div><div class='a' style='left:7px;top:484px;width:5px;height:1px;background:#000'></div><div class='a' style='left:9px;top:482px;width:1px;height:5px;background:#000'></div><div class='a' style='left:15px;top:484px;width:6px;height:1px;background:repeating-linear-gradient(90deg,#000 0,#000 1px,transparent 1px,transparent 2px)'></div><svg class='a' style='left:21px;top:478px' width='16' height='13'><path d='M0.5 2.5 L5 2.5 L6 0.5 L10 0.5 L11 2.5 L14.5 2.5 L14.5 12 L0.5 12 Z' fill='#e8e888' stroke='#a8a848'/><path d='M1.5 4 L13.5 4' stroke='#fff' stroke-width='1'/><path d='M15 4 L15 12.5 L1 12.5' stroke='#707030' fill='none'/></svg><div class='t' style='left:41px;top:479px;font-size:11px'>Dynon Avionics</div></div><div class='a' style='left:178px;top:124px;width:13px;height:488px;background:#fff'></div><div class='a' style='left:179px;top:128px;width:10px;height:135px;border-radius:5px;background:linear-gradient(90deg,#5064c0 0%,#88a4e4 30%,#a0bcf0 50%,#88a4e4 70%,#5064c0 100%);border:1px solid #3c48a8'></div><svg class='a' style='left:180px;top:185px' width='8' height='18'><path d='M2 1 L8 5 M1 4 L8 9 M1 8 L8 13 M1 12 L6 16' stroke='#111' stroke-width='1.3'/></svg><div class='a' style='left:179px;top:264px;width:10px;height:326px;border-radius:5px;background:linear-gradient(90deg,#e0e0e0,#fafafa 50%,#e0e0e0)'></div><svg class='a' style='left:178px;top:590px' width='12' height='22'><path d='M2 8 L6 3 L10 8 Z M2 14 L10 14 L6 19 Z' fill='#444'/></svg><div class='a' style='left:11px;top:612px;width:180px;height:11px;background:#f4f4f4'></div><div class='a' style='left:12px;top:612px;width:115px;height:10px;border-radius:6px;background:linear-gradient(180deg,#5064c0 0%,#88a4e4 30%,#a0bcf0 50%,#88a4e4 70%,#5064c0 100%);border:1px solid #3c48a8'></div><div class='a' style='left:127px;top:612px;width:30px;height:10px;border-radius:6px;background:linear-gradient(180deg,#e8e8e8,#fafafa 50%,#e0e0e0)'></div><svg class='a' style='left:158px;top:612px' width='22' height='10'><path d='M2 5 L7 1 L7 9 Z M14 1 L19 5 L14 9 Z' fill='#444'/></svg><div class='a' style='left:7px;top:629px;width:187px;height:109px;border-top:2px solid #000;border-left:2px solid #000;border-right:1px solid #d0d0d0;border-bottom:1px solid #fff;background:#f4f4f4'></div><div class='a' style='left:11px;top:637px;width:180px;height:91px;background:#d4d0c8;border:1px solid #fff;outline:1px solid #a0a0a0'></div><div class='a' style='left:14px;top:633px;width:46px;height:10px;background:#d4d0c8'></div><div class='t' style='left:16px;top:632px;font-size:11px;letter-spacing:-0.05px'>Preview:</div><div class='a stripe' style='left:203px;top:47px;width:821px;height:695px'></div><div class='a' style='left:203px;top:47px;width:820px;height:690px;border:1px solid #000;border-width:1px 2px 2px 1px'></div><div class='a' style='left:207px;top:51px;width:812px;height:1px;background:#888'></div><svg class='a' style='left:210px;top:54px' width='15' height='16'><rect x='0.5' y='0.5' width='14' height='15' rx='2' fill='#3a2a70' stroke='#222'/><rect x='2' y='2' width='11' height='6' fill='#6a90d8'/><rect x='3' y='8' width='9' height='5' fill='#a06040'/><path d='M1 14 L14 14' stroke='#666'/></svg><svg class='a' style='left:227px;top:54px' width='17' height='16'><circle cx='8.5' cy='8' r='7' fill='#e0d4f0' stroke='#6a3aa0' stroke-width='1.6'/><path d='M4 10.5 L8.5 4.5 L13 10.5 Z' fill='#6a3a98'/></svg><svg class='a' style='left:244px;top:54px' width='17' height='16'><circle cx='8.5' cy='8' r='7' fill='#f0e070' stroke='#804820' stroke-width='1.6'/><rect x='3.5' y='6.5' width='10' height='3' fill='#a07020'/></svg><div class='t' style='left:587px;top:57px;font-size:11px'>velocitypanel.pp3</div><svg class='a' style='left:1003px;top:54px' width='16' height='16'><circle cx='8' cy='8' r='7' fill='#d06868' stroke='#903838' stroke-width='1.2'/><circle cx='8' cy='7' r='5' fill='#e88888'/><path d='M5 5 L11 11 M11 5 L5 11' stroke='#7a2020' stroke-width='2'/></svg><div class='a' style='left:207px;top:74px;width:812px;height:1px;background:#000'></div><div class='a' style='left:207px;top:74px;width:1px;height:404px;background:#000'></div><div class='a' style='left:208px;top:75px;width:811px;height:21px;background:#eef3f3'></div><div class='a' style='left:288px;top:79px;width:80px;height:17px;border:1px solid #a8a8a8;border-bottom:none;border-radius:5px 5px 0 0;background:linear-gradient(180deg,#fff,#f4f4f4)'></div><div class='t' style='left:292px;top:82px;font-size:11px;letter-spacing:-0.27px'>Panel Top View</div><div class='a' style='left:370px;top:79px;width:107px;height:17px;border:1px solid #a8a8a8;border-bottom:none;border-radius:5px 5px 0 0;background:linear-gradient(180deg,#fff,#f4f4f4)'></div><div class='t' style='left:374px;top:82px;font-size:11px;letter-spacing:-0.33px'>Equipment Summary</div><div class='a' style='left:208px;top:96px;width:811px;height:377px;border:1px solid #84c4ec;border-left:2px solid #6cacec;border-bottom:2px solid #5aa0e4;border-radius:0 4px 4px 4px'></div><div class='a' style='left:209px;top:77px;width:78px;height:20px;border:2px solid #4858b0;border-bottom:none;border-radius:7px 7px 0 0;background:linear-gradient(180deg,#a0b4e8 0%,#bccdf0 40%,#d4e4f8 75%,#e4f0fc 100%)'></div><div class='t' style='left:215px;top:80px;font-size:11px;letter-spacing:-0.4px'>Panel Planner</div><div class='t' style='left:210px;top:100px;font-size:9.5px;letter-spacing:-0.1px'>x:15.125 Inches</div><div class='t' style='left:210px;top:117px;font-size:9.5px;letter-spacing:-0.1px'>y:3.597 Inches</div><div class='btn' style='left:445px;top:104px'><svg class='a' style='left:2px;top:2px' width='15' height='15'><path d='M2 13 L5 8 L10 3 L12 5 L7 10 Z' fill='#fff' stroke='#000' stroke-width='1.5'/><path d='M9 2 L13 6 M11 1 L14 4' stroke='#000' stroke-width='1.3'/></svg></div><div class='a' style='left:475px;top:104px;width:20px;height:20px;background:#303040;border:1px solid #202020'><svg class='a' style='left:0;top:0' width='19' height='19'><rect width='19' height='19' fill='#302858'/><path d='M0 19 L0 3 C8 3,17 10,19 19 Z' fill='#4c58a0'/><path d='M4 16 L10 5' stroke='#fff' stroke-width='1.5'/><circle cx='14' cy='12' r='2' fill='#70c0a0'/><circle cx='9' cy='15' r='1.5' fill='#70c0a0'/></svg></div><div class='btn' style='left:495px;top:104px'><svg class='a' style='left:1px;top:1px' width='17' height='17'><circle cx='8.5' cy='8.5' r='5.5' fill='none' stroke='#000' stroke-width='1.3'/><circle cx='3' cy='3' r='1.6' fill='#fff' stroke='#000'/><circle cx='14' cy='3' r='1.6' fill='#fff' stroke='#000'/><circle cx='3' cy='14' r='1.6' fill='#fff' stroke='#000'/><circle cx='14' cy='14' r='1.6' fill='#fff' stroke='#000'/></svg></div><div class='btn' style='left:525px;top:104px'><svg class='a' style='left:1px;top:1px' width='17' height='17'><circle cx='7' cy='7' r='4.5' fill='#fff' stroke='#000' stroke-width='1.3'/><path d='M10 10 L14 14' stroke='#000' stroke-width='1.8'/><path d='M4.5 7 L9.5 7' stroke='#000' stroke-width='1.3'/></svg></div><div class='btn' style='left:545px;top:104px'><svg class='a' style='left:1px;top:1px' width='17' height='17'><circle cx='7' cy='7' r='4.5' fill='#fff' stroke='#000' stroke-width='1.3'/><path d='M10 10 L14 14' stroke='#000' stroke-width='1.8'/><path d='M4.5 7 L9.5 7 M7 4.5 L7 9.5' stroke='#000' stroke-width='1.3'/></svg></div><div class='btn' style='left:575px;top:104px'><div class='a' style='left:4px;top:4px;width:10px;height:10px;border:2px solid #000;background:#fff'></div></div><div class='a' style='left:605px;top:104px;width:20px;height:20px;background:#fff;border:1px solid #000'><div class='a' style='left:6px;top:0;width:1px;height:18px;background:#c8c0f0'></div><div class='a' style='left:12px;top:0;width:1px;height:18px;background:#c8c0f0'></div><div class='a' style='left:0;top:6px;width:18px;height:1px;background:#c8c0f0'></div><div class='a' style='left:0;top:12px;width:18px;height:1px;background:#c8c0f0'></div><div class='a' style='left:6px;top:6px;width:7px;height:7px;background:#000'></div></div><div class='btn' style='left:661px;top:104px'><svg class='a' style='left:-1px;top:-1px' width='20' height='20'><path d='M3.5 3 V17 M4.5 4.5 H10.5 V9.5 H4.5 M4.5 11.5 H15.5 V16.5 H4.5' fill='none' stroke='#000' stroke-width='1.5'/></svg></div><div class='btn' style='left:681px;top:104px'><svg class='a' style='left:-1px;top:-1px' width='20' height='20'><path d='M9.5 3 V17 M6.5 4.5 H12.5 V9.5 H6.5 Z M4.5 11.5 H14.5 V16.5 H4.5 Z' fill='none' stroke='#000' stroke-width='1.5'/></svg></div><div class='btn' style='left:701px;top:104px'><svg class='a' style='left:-1px;top:-1px' width='20' height='20'><path d='M15.5 3 V17 M14.5 4.5 H8.5 V9.5 H14.5 M14.5 11.5 H4.5 V16.5 H14.5' fill='none' stroke='#000' stroke-width='1.5'/></svg></div><div class='btn' style='left:721px;top:104px'><svg class='a' style='left:-1px;top:-1px' width='20' height='20'><path d='M3 3.5 H17 M4.5 4.5 V16.5 H9.5 V4.5 M11.5 4.5 V10.5 H15.5 V4.5' fill='none' stroke='#000' stroke-width='1.5'/></svg></div><div class='btn' style='left:741px;top:104px'><svg class='a' style='left:-1px;top:-1px' width='20' height='20'><path d='M3 9.5 H17 M4.5 6.5 H8.5 V12.5 H4.5 Z M11.5 6.5 H15.5 V12.5 H11.5 Z' fill='none' stroke='#000' stroke-width='1.5'/></svg></div><div class='btn' style='left:761px;top:104px'><svg class='a' style='left:-1px;top:-1px' width='20' height='20'><path d='M3 16.5 H17 M4.5 15.5 V4.5 H9.5 V15.5 M11.5 15.5 V8.5 H15.5 V15.5' fill='none' stroke='#000' stroke-width='1.5'/></svg></div><div class='btn' style='left:790px;top:104px'><svg class='a' style='left:-1px;top:-1px' width='20' height='20'><path d='M2 4.5 H5.5 V14.5 M13.5 14.5 V4.5 H17 M7.5 4.5 V12.5 H11.5 V4.5 M5.5 16.5 H13.5' fill='none' stroke='#000' stroke-width='1.5'/></svg></div><div class='btn' style='left:810px;top:104px'><svg class='a' style='left:-1px;top:-1px' width='20' height='20'><path d='M3.5 3 V7 M3.5 9 V11 M3.5 13 V17 M15.5 3 V7 M15.5 9 V11 M15.5 13 V17 M5.5 4.5 H13.5 V8.5 H5.5 Z M3.5 10.5 H15.5' fill='none' stroke='#000' stroke-width='1.5'/><rect x='5.5' y='12.5' width='8' height='4' fill='#fff' stroke='#000' stroke-width='1.1'/></svg></div><div class='btn' style='left:830px;top:104px'><svg class='a' style='left:-1px;top:-1px' width='20' height='20'><path d='M3.5 4 V10.5 H13 M10.5 8 L13 10.5 L10.5 13 M15.5 3 V5 M15.5 7 V9 M15.5 11 V13 M15.5 15 V17 M5 4.5 H8' fill='none' stroke='#000' stroke-width='1.5'/></svg></div><div class='btn' style='left:850px;top:104px'><svg class='a' style='left:-1px;top:-1px' width='20' height='20'><path d='M4.5 3 V13 M2.5 11 L4.5 13.5 L6.5 11 M8.5 4.5 H15.5 V12.5 H8.5 Z M3 16.5 H5 M7 16.5 H9 M11 16.5 H13 M15 16.5 H17' fill='none' stroke='#000' stroke-width='1.5'/></svg></div><div class='a' style='left:211px;top:132px;width:793px;height:327px;background:#d4d4d4;border:1px solid #000;border-width:2px 1px 1px 2px'></div><div class='a' style='left:1004px;top:133px;width:12px;height:326px;background:#f8f8f8'></div><div class='a' style='left:1004px;top:134px;width:10px;height:60px;border-radius:5px;background:linear-gradient(90deg,#d8d8d8,#fafafa 50%,#e0e0e0)'></div><div class='a' style='left:1004px;top:194px;width:10px;height:73px;border-radius:5px;background:linear-gradient(90deg,#5064c0 0%,#88a4e4 30%,#a0bcf0 50%,#88a4e4 70%,#5064c0 100%);border:1px solid #3c48a8'></div><svg class='a' style='left:1005px;top:222px' width='9' height='16'><path d='M1 2 L6 6 M1 5 L7 10 M1 9 L7 14 M3 13 L7 16' stroke='#111' stroke-width='1.3'/></svg><div class='a' style='left:1004px;top:267px;width:10px;height:169px;border-radius:5px;background:linear-gradient(90deg,#d8d8d8,#fafafa 50%,#e0e0e0)'></div><svg class='a' style='left:1003px;top:437px' width='12' height='22'><path d='M2 9 L6 4 L10 9 Z M2 13 L10 13 L6 18 Z' fill='#444'/></svg><div class='a' style='left:212px;top:459px;width:792px;height:11px;background:#f8f8f8'></div><div class='a' style='left:213px;top:459px;width:103px;height:10px;border-radius:5px;background:linear-gradient(180deg,#d8d8d8,#fafafa 50%,#e0e0e0)'></div><div class='a' style='left:316px;top:459px;width:177px;height:10px;border-radius:5px;background:linear-gradient(180deg,#5064c0 0%,#88a4e4 30%,#a0bcf0 50%,#88a4e4 70%,#5064c0 100%);border:1px solid #3c48a8'></div><div class='a' style='left:493px;top:459px;width:490px;height:10px;border-radius:5px;background:linear-gradient(180deg,#d8d8d8,#fafafa 50%,#e0e0e0)'></div><svg class='a' style='left:982px;top:459px' width='22' height='10'><path d='M2 5 L7 1 L7 9 Z M14 1 L19 5 L14 9 Z' fill='#444'/></svg><svg class='a' style='left:0;top:0' width='1024' height='742' viewBox='0 0 1024 742'><defs><clipPath id='cv'><rect x='213' y='134' width='790' height='324'/></clipPath><radialGradient id='glare' cx='0.5' cy='0.5' r='0.5'><stop offset='0' stop-color='#8a8a8a' stop-opacity='0.9'/><stop offset='0.6' stop-color='#5a5a5a' stop-opacity='0.6'/><stop offset='1' stop-color='#0e0e0e' stop-opacity='0'/></radialGradient><radialGradient id='glare2' cx='0.5' cy='0.5' r='0.5'><stop offset='0' stop-color='#707070' stop-opacity='0.8'/><stop offset='1' stop-color='#2a2a2a' stop-opacity='0'/></radialGradient><linearGradient id='sky' x1='0' y1='0' x2='0' y2='1'><stop offset='0' stop-color='#24364e'/><stop offset='0.18' stop-color='#3c5c7c'/><stop offset='0.32' stop-color='#8cb4cc'/><stop offset='1' stop-color='#8cb4cc'/></linearGradient><clipPath id='att'><circle cx='612' cy='289' r='96'/></clipPath><clipPath id='sph'><ellipse cx='612' cy='282' rx='72' ry='68'/></clipPath></defs><g clip-path='url(#cv)'><defs><linearGradient id='asb1' x1='0' y1='0' x2='0' y2='1'><stop offset='0' stop-color='#56524e'/><stop offset='0.5' stop-color='#3a3734'/><stop offset='1' stop-color='#161212'/></linearGradient><linearGradient id='asb2' x1='0' y1='0' x2='0' y2='1'><stop offset='0' stop-color='#221e1e'/><stop offset='0.6' stop-color='#2e2b29'/><stop offset='1' stop-color='#3a3734'/></linearGradient></defs><circle cx='352' cy='288.3' r='109.6' fill='url(#asb1)'/><circle cx='352' cy='288.3' r='106.5' fill='#3d3a37'/><circle cx='352' cy='288.6' r='99' fill='url(#asb2)'/><circle cx='352' cy='288.8' r='96.2' fill='#0c0c0c'/><defs><filter id='blur3' x='-20%' y='-20%' width='140%' height='140%'><feGaussianBlur stdDeviation='3'/></filter><radialGradient id='asg' cx='284' cy='222' r='72' gradientUnits='userSpaceOnUse'><stop offset='0' stop-color='#a0a0a0'/><stop offset='0.55' stop-color='#808080'/><stop offset='1' stop-color='#3a3a3a'/></radialGradient><filter id='blur2' x='-20%' y='-20%' width='140%' height='140%'><feGaussianBlur stdDeviation='2'/></filter></defs><path d='M 271.0 275.2 L 268.5 271.8 L 267.6 268.7 L 267.1 265.5 L 266.9 262.3 L 266.9 259.1 L 267.1 255.9 L 267.6 252.8 L 268.2 249.6 L 269.0 246.5 L 269.9 243.4 L 271.1 240.4 L 272.4 237.5 L 273.8 234.6 L 275.4 231.7 L 277.1 229.0 L 279.0 226.3 L 281.0 223.7 L 283.1 221.3 L 285.4 218.9 L 287.8 216.7 L 290.2 214.5 L 292.8 212.5 L 295.5 210.7 L 298.3 208.9 L 301.1 207.4 L 304.0 205.9 L 307.0 204.6 L 310.1 203.5 L 313.1 202.5 L 316.3 201.7 L 319.4 201.1 L 322.6 200.6 L 325.8 200.4 L 329.0 200.3 L 332.2 200.3 L 335.3 200.7 L 338.5 201.2 L 341.6 202.0 L 344.7 203.3 L 347.7 206.1 L 347.7 206.1 L 345.2 209.3 L 342.7 211.2 L 340.3 212.8 L 337.9 214.3 L 335.6 215.7 L 333.4 217.1 L 331.2 218.5 L 329.1 219.9 L 327.0 221.3 L 325.0 222.7 L 323.0 224.2 L 321.0 225.6 L 319.1 227.0 L 317.2 228.5 L 315.4 229.9 L 313.5 231.4 L 311.7 232.9 L 310.0 234.4 L 308.2 235.9 L 306.5 237.5 L 304.8 239.0 L 303.1 240.6 L 301.4 242.2 L 299.7 243.8 L 298.1 245.5 L 296.4 247.2 L 294.8 248.9 L 293.2 250.7 L 291.6 252.5 L 289.9 254.3 L 288.3 256.2 L 286.7 258.1 L 285.1 260.1 L 283.4 262.1 L 281.8 264.2 L 280.1 266.3 L 278.4 268.5 L 276.6 270.7 L 274.5 273.0 L 271.0 275.2 Z' fill='#5a5a5a' filter='url(#blur2)'/><path d='M 271.5 267.9 L 271.0 265.3 L 270.8 262.6 L 270.9 260.0 L 271.1 257.4 L 271.4 254.8 L 271.8 252.2 L 272.4 249.6 L 273.1 247.1 L 273.9 244.6 L 274.8 242.1 L 275.8 239.6 L 277.0 237.2 L 278.2 234.8 L 279.6 232.5 L 281.1 230.3 L 282.6 228.1 L 284.3 226.0 L 286.1 224.0 L 287.9 222.0 L 289.8 220.2 L 291.9 218.4 L 294.0 216.7 L 296.1 215.1 L 298.4 213.7 L 300.7 212.3 L 303.1 211.0 L 305.5 209.9 L 307.9 208.8 L 310.4 207.9 L 313.0 207.1 L 315.5 206.4 L 318.1 205.8 L 320.7 205.4 L 323.3 205.0 L 326.0 204.8 L 328.6 204.7 L 331.2 204.7 L 333.8 204.9 L 336.4 205.3 L 339.0 206.0 L 339.0 206.0 L 336.8 207.6 L 334.7 208.9 L 332.6 210.2 L 330.5 211.5 L 328.5 212.8 L 326.5 214.1 L 324.5 215.4 L 322.6 216.7 L 320.7 218.0 L 318.9 219.4 L 317.1 220.7 L 315.3 222.1 L 313.6 223.5 L 311.9 224.9 L 310.2 226.3 L 308.5 227.7 L 306.9 229.1 L 305.2 230.5 L 303.6 232.0 L 302.0 233.4 L 300.4 234.9 L 298.8 236.4 L 297.3 237.9 L 295.7 239.4 L 294.2 241.0 L 292.6 242.5 L 291.1 244.1 L 289.6 245.7 L 288.0 247.4 L 286.5 249.1 L 285.0 250.8 L 283.5 252.5 L 282.1 254.3 L 280.6 256.1 L 279.1 258.0 L 277.6 259.9 L 276.2 261.9 L 274.7 263.9 L 273.2 265.9 L 271.5 267.9 Z' fill='#787878' filter='url(#blur2)'/><path d='M 274.1 256.5 L 274.4 254.8 L 274.7 253.1 L 275.1 251.4 L 275.5 249.7 L 276.0 248.0 L 276.5 246.3 L 277.0 244.6 L 277.6 243.0 L 278.3 241.3 L 279.0 239.7 L 279.8 238.1 L 280.6 236.5 L 281.5 234.9 L 282.4 233.4 L 283.4 231.9 L 284.4 230.5 L 285.5 229.1 L 286.6 227.7 L 287.8 226.4 L 289.1 225.1 L 290.4 223.8 L 291.7 222.6 L 293.1 221.5 L 294.5 220.4 L 295.9 219.4 L 297.4 218.4 L 298.9 217.5 L 300.5 216.6 L 302.1 215.8 L 303.7 215.0 L 305.3 214.3 L 307.0 213.6 L 308.6 213.0 L 310.3 212.5 L 312.0 212.0 L 313.7 211.5 L 315.4 211.1 L 317.1 210.7 L 318.8 210.4 L 320.5 210.1 L 320.5 210.1 L 319.1 211.1 L 317.8 212.2 L 316.4 213.2 L 315.1 214.3 L 313.8 215.4 L 312.5 216.4 L 311.2 217.6 L 310.0 218.7 L 308.8 219.8 L 307.6 220.9 L 306.4 222.0 L 305.2 223.2 L 304.1 224.3 L 302.9 225.4 L 301.8 226.5 L 300.6 227.7 L 299.5 228.8 L 298.4 229.9 L 297.3 231.0 L 296.1 232.1 L 295.0 233.3 L 293.9 234.4 L 292.8 235.5 L 291.7 236.6 L 290.5 237.8 L 289.4 238.9 L 288.3 240.1 L 287.2 241.2 L 286.0 242.4 L 284.9 243.6 L 283.8 244.8 L 282.7 246.0 L 281.6 247.2 L 280.4 248.5 L 279.4 249.8 L 278.3 251.1 L 277.2 252.4 L 276.2 253.8 L 275.1 255.1 L 274.1 256.5 Z' fill='#8c8c8c' filter='url(#blur2)'/><line x1='358.9' y1='209.3' x2='360.3' y2='193.4' stroke='#e4e4e4' stroke-width='2.3'/><line x1='365.1' y1='205.0' x2='366.9' y2='194.2' stroke='#e4e4e4' stroke-width='2.3'/><line x1='372.3' y1='206.5' x2='375.0' y2='195.8' stroke='#e4e4e4' stroke-width='2.3'/><line x1='380.3' y1='214.2' x2='386.0' y2='199.3' stroke='#e4e4e4' stroke-width='2.3'/><line x1='394.0' y1='215.3' x2='399.5' y2='205.7' stroke='#e4e4e4' stroke-width='2.3'/><line x1='399.5' y1='224.9' x2='409.2' y2='212.1' stroke='#e4e4e4' stroke-width='2.3'/><line x1='414.4' y1='231.8' x2='422.6' y2='224.4' stroke='#e4e4e4' stroke-width='2.3'/><line x1='421.1' y1='249.7' x2='435.1' y2='241.9' stroke='#e4e4e4' stroke-width='2.3'/><line x1='432.7' y1='264.8' x2='443.3' y2='261.8' stroke='#e4e4e4' stroke-width='2.3'/><line x1='431.0' y1='285.2' x2='446.9' y2='284.7' stroke='#e4e4e4' stroke-width='2.3'/><line x1='433.5' y1='308.3' x2='444.2' y2='311.0' stroke='#e4e4e4' stroke-width='2.3'/><line x1='419.7' y1='328.7' x2='433.4' y2='336.9' stroke='#e4e4e4' stroke-width='2.3'/><line x1='407.1' y1='351.4' x2='414.3' y2='359.7' stroke='#e4e4e4' stroke-width='2.3'/><line x1='382.9' y1='360.7' x2='389.1' y2='375.4' stroke='#e4e4e4' stroke-width='2.3'/><line x1='360.8' y1='371.5' x2='361.9' y2='382.5' stroke='#e4e4e4' stroke-width='2.3'/><line x1='335.6' y1='365.3' x2='332.2' y2='380.9' stroke='#e4e4e4' stroke-width='2.3'/><line x1='312.5' y1='356.4' x2='304.5' y2='370.3' stroke='#e4e4e4' stroke-width='2.3'/><line x1='295.8' y1='350.4' x2='288.4' y2='358.6' stroke='#e4e4e4' stroke-width='2.3'/><line x1='285.0' y1='329.9' x2='271.4' y2='338.3' stroke='#e4e4e4' stroke-width='2.3'/><line x1='272.1' y1='314.0' x2='261.6' y2='317.4' stroke='#e4e4e4' stroke-width='2.3'/><line x1='273.8' y1='299.0' x2='257.9' y2='301.2' stroke='#e4e4e4' stroke-width='2.3'/><line x1='268.1' y1='285.1' x2='257.1' y2='284.7' stroke='#e4e4e4' stroke-width='2.3'/><line x1='274.5' y1='272.9' x2='258.7' y2='269.9' stroke='#e4e4e4' stroke-width='2.3'/><line x1='273.1' y1='259.3' x2='262.7' y2='255.5' stroke='#e4e4e4' stroke-width='2.3'/><line x1='282.6' y1='250.3' x2='268.5' y2='242.7' stroke='#e4e4e4' stroke-width='2.3'/><line x1='284.5' y1='238.0' x2='275.6' y2='231.5' stroke='#e4e4e4' stroke-width='2.3'/><line x1='295.2' y1='233.1' x2='283.7' y2='222.0' stroke='#e4e4e4' stroke-width='2.3'/><line x1='298.0' y1='223.7' x2='290.9' y2='215.2' stroke='#e4e4e4' stroke-width='2.3'/><line x1='310.1' y1='221.0' x2='301.7' y2='207.4' stroke='#e4e4e4' stroke-width='2.3'/><line x1='354.4' y1='243.1' x2='355.0' y2='230.1' stroke='#e4e4e4' stroke-width='2.2'/><line x1='360.5' y1='239.7' x2='362.1' y2='230.9' stroke='#e4e4e4' stroke-width='2.2'/><line x1='366.7' y1='245.5' x2='370.9' y2='233.2' stroke='#e4e4e4' stroke-width='2.2'/><line x1='377.2' y1='246.0' x2='381.9' y2='238.3' stroke='#e4e4e4' stroke-width='2.2'/><line x1='380.9' y1='253.5' x2='389.3' y2='243.6' stroke='#e4e4e4' stroke-width='2.2'/><line x1='391.1' y1='258.5' x2='398.3' y2='253.1' stroke='#e4e4e4' stroke-width='2.2'/><line x1='392.4' y1='268.3' x2='404.1' y2='262.6' stroke='#e4e4e4' stroke-width='2.2'/><line x1='400.7' y1='282.9' x2='409.7' y2='281.9' stroke='#e4e4e4' stroke-width='2.2'/><line x1='396.3' y1='295.8' x2='409.1' y2='298.1' stroke='#e4e4e4' stroke-width='2.2'/><line x1='395.3' y1='311.0' x2='403.2' y2='315.2' stroke='#e4e4e4' stroke-width='2.2'/><line x1='382.7' y1='320.9' x2='391.6' y2='330.4' stroke='#e4e4e4' stroke-width='2.2'/><line x1='370.4' y1='333.4' x2='373.7' y2='341.8' stroke='#e4e4e4' stroke-width='2.2'/><line x1='335.1' y1='329.7' x2='330.3' y2='341.8' stroke='#e4e4e4' stroke-width='2.2'/><line x1='317.4' y1='322.6' x2='311.0' y2='329.0' stroke='#e4e4e4' stroke-width='2.2'/><line x1='312.3' y1='309.1' x2='300.8' y2='315.2' stroke='#e4e4e4' stroke-width='2.2'/><line x1='304.1' y1='298.2' x2='295.3' y2='300.1' stroke='#e4e4e4' stroke-width='2.2'/><line x1='307.0' y1='288.0' x2='294.0' y2='288.0' stroke='#e4e4e4' stroke-width='2.2'/><line x1='303.4' y1='281.4' x2='294.5' y2='280.2' stroke='#e4e4e4' stroke-width='2.2'/><line x1='309.3' y1='273.7' x2='297.0' y2='269.6' stroke='#e4e4e4' stroke-width='2.2'/><line x1='308.3' y1='265.8' x2='300.3' y2='261.7' stroke='#e4e4e4' stroke-width='2.2'/><line x1='315.6' y1='261.5' x2='305.1' y2='253.9' stroke='#e4e4e4' stroke-width='2.2'/><line x1='316.6' y1='254.1' x2='310.1' y2='247.9' stroke='#e4e4e4' stroke-width='2.2'/><line x1='323.5' y1='253.2' x2='315.3' y2='243.1' stroke='#e4e4e4' stroke-width='2.2'/><line x1='325.3' y1='246.9' x2='320.4' y2='239.4' stroke='#e4e4e4' stroke-width='2.2'/><text x='360' y='222.7' font-family='Liberation Sans' font-size='13' fill='#dcdcdc' text-anchor='middle'>20</text><text x='388' y='232.7' font-family='Liberation Sans' font-size='13' fill='#dcdcdc' text-anchor='middle'>40</text><text x='418' y='271.7' font-family='Liberation Sans' font-size='13' fill='#dcdcdc' text-anchor='middle'>60</text><text x='400' y='341.7' font-family='Liberation Sans' font-size='13' fill='#dcdcdc' text-anchor='middle'>80</text><text x='324' y='356.7' font-family='Liberation Sans' font-size='13' fill='#dcdcdc' text-anchor='middle'>100</text><text x='283' y='302.7' font-family='Liberation Sans' font-size='13' fill='#dcdcdc' text-anchor='middle'>120</text><text x='293' y='256.7' font-family='Liberation Sans' font-size='13' fill='#dcdcdc' text-anchor='middle'>140</text><text x='313' y='234.7' font-family='Liberation Sans' font-size='13' fill='#dcdcdc' text-anchor='middle'>160</text><text x='357' y='254.1' font-family='Liberation Sans' font-size='11.5' fill='#dcdcdc' text-anchor='middle'>20</text><text x='374' y='263.1' font-family='Liberation Sans' font-size='11.5' fill='#dcdcdc' text-anchor='middle'>40</text><text x='385' y='296.1' font-family='Liberation Sans' font-size='11.5' fill='#dcdcdc' text-anchor='middle'>60</text><text x='319' y='305.1' font-family='Liberation Sans' font-size='11.5' fill='#dcdcdc' text-anchor='middle'>100</text><text x='321' y='274.1' font-family='Liberation Sans' font-size='11.5' fill='#dcdcdc' text-anchor='middle'>120</text><text x='331' y='262.1' font-family='Liberation Sans' font-size='11.5' fill='#dcdcdc' text-anchor='middle'>140</text><text x='331' y='309.5' font-family='Liberation Sans' font-size='11' fill='#dcdcdc' textLength='43.5' lengthAdjust='spacingAndGlyphs'>AIRSPEED</text><text x='343' y='227' font-family='Liberation Sans' font-size='6.5' font-weight='bold' fill='#c8c8c8' text-anchor='middle'>HP</text><text x='350' y='266' font-family='Liberation Sans' font-size='6' font-weight='bold' fill='#a0a0a0' text-anchor='middle'>KNOTS</text><rect x='350' y='335' width='4' height='11' fill='#e8e8e8'/><path d='M350 337 h4 M350 339 h4 M350 341 h4 M350 343 h4' stroke='#555' stroke-width='0.6'/><path d='M350 205 L352 201 L354 205 L354 216 L350 216 Z' fill='#e8e8e8'/><rect x='351.2' y='216' width='1.6' height='25' fill='#9a9a9a'/><path d='M348 248 L352 240 L356 248 L356 279 L348 279 Z' fill='#f0f0f0'/><rect x='350' y='279' width='4' height='42' fill='#1e1e1e'/><circle cx='352' cy='288' r='6' fill='#262626'/><circle cx='342' cy='288' r='4' fill='#262626'/><circle cx='362' cy='288' r='4' fill='#262626'/><circle cx='352' cy='278' r='4' fill='#262626'/><circle cx='352' cy='319' r='6' fill='#222'/><defs><radialGradient id='skyband' cx='612' cy='289' r='99' gradientUnits='userSpaceOnUse'><stop offset='0.74' stop-color='#88b0c8'/><stop offset='0.84' stop-color='#80a8c0'/><stop offset='0.845' stop-color='#7098b4'/><stop offset='0.89' stop-color='#7098b4'/><stop offset='0.895' stop-color='#5a80a0'/><stop offset='0.93' stop-color='#5a80a0'/><stop offset='0.935' stop-color='#42627e'/><stop offset='0.965' stop-color='#42627e'/><stop offset='0.97' stop-color='#2a4058'/><stop offset='1' stop-color='#1e2c3c'/></radialGradient><radialGradient id='gndband' cx='612' cy='289' r='99' gradientUnits='userSpaceOnUse'><stop offset='0.74' stop-color='#6a3820'/><stop offset='0.84' stop-color='#62341e'/><stop offset='0.845' stop-color='#552c18'/><stop offset='0.89' stop-color='#552c18'/><stop offset='0.895' stop-color='#482414'/><stop offset='0.93' stop-color='#482414'/><stop offset='0.935' stop-color='#381c10'/><stop offset='0.965' stop-color='#381c10'/><stop offset='0.97' stop-color='#24120a'/><stop offset='1' stop-color='#180c06'/></radialGradient><clipPath id='sphc'><circle cx='612' cy='289' r='72.5'/></clipPath><linearGradient id='cap' x1='0' y1='0' x2='0' y2='1'><stop offset='0' stop-color='#18283a'/><stop offset='0.5' stop-color='#2c4460'/><stop offset='1' stop-color='#4a6a88'/></linearGradient><clipPath id='dome'><path d='M539.94 281.5 A72.5 72.5 0 0 1 684.06 281.5 Z'/></clipPath><radialGradient id='domesh' cx='612' cy='289' r='72.5' gradientUnits='userSpaceOnUse'><stop offset='0.8' stop-color='#8cb4cc' stop-opacity='0'/><stop offset='0.93' stop-color='#5a7c98' stop-opacity='0.6'/><stop offset='1' stop-color='#2c4058' stop-opacity='0.9'/></radialGradient></defs><defs><linearGradient id='atb1' x1='0' y1='0' x2='0' y2='1'><stop offset='0' stop-color='#4a4440'/><stop offset='0.5' stop-color='#1a1818'/><stop offset='1' stop-color='#2c2a22'/></linearGradient></defs><circle cx='612.3' cy='288.5' r='111.2' fill='url(#atb1)'/><circle cx='612.3' cy='288.5' r='109.2' fill='#121212'/><circle cx='612.3' cy='289' r='101' fill='#1a1618'/><g clip-path='url(#att)'><rect x='510' y='185' width='210' height='104' fill='url(#skyband)'/><rect x='510' y='289' width='210' height='120' fill='url(#gndband)'/><path d='M 505 350 L 520 345 L 532 320.5 L 689 318 L 702 345 L 720 350 L 720 420 L 505 420 Z' fill='#0b0b0b'/><path d='M539.94 281 L684.06 281 A72.5 72.5 0 0 1 539.94 281 Z' fill='#0b0b0b'/></g><line x1='550.1' y1='250.3' x2='534.8' y2='240.8' stroke='#f2f2f2' stroke-width='3.4'/><line x1='577.7' y1='224.5' x2='569.7' y2='209.5' stroke='#f2f2f2' stroke-width='3.4'/><line x1='587.0' y1='220.4' x2='581.9' y2='206.3' stroke='#f2f2f2' stroke-width='2.4'/><line x1='599.3' y1='217.1' x2='596.7' y2='202.3' stroke='#f2f2f2' stroke-width='2.4'/><line x1='624.7' y1='217.1' x2='627.3' y2='202.3' stroke='#f2f2f2' stroke-width='2.4'/><line x1='637.0' y1='220.4' x2='642.1' y2='206.3' stroke='#f2f2f2' stroke-width='2.4'/><line x1='646.3' y1='224.5' x2='654.3' y2='209.5' stroke='#f2f2f2' stroke-width='3.4'/><line x1='673.9' y1='250.3' x2='689.2' y2='240.8' stroke='#f2f2f2' stroke-width='3.4'/><rect x='522.5' y='287.5' width='18' height='2.6' fill='#f4f4f4'/><rect x='684' y='287.5' width='18' height='2.6' fill='#f4f4f4'/><path d='M601 192.5 L622.5 192.5 L617 210 Q612.3 216 607.5 210 Z' fill='#c01c24'/><path d='M610.8 195 L613.8 195 L613.2 213 L611.4 213 Z' fill='#f4f4f4'/><circle cx='545' cy='233.8' r='4.3' fill='#1e1e1e'/><path d='M542 236 L548 231' stroke='#444' stroke-width='0.8'/><g clip-path='url(#dome)'><rect x='538' y='210' width='150' height='72' fill='#8cb4cc'/><rect x='538' y='210' width='150' height='72' fill='url(#domesh)'/><path d='M530 251 Q612 226 694 251 L694 205 L530 205 Z' fill='url(#cap)'/></g><rect x='540.4' y='280.6' width='143.2' height='2.4' fill='#f4f4f4'/><path d='M539 283 L685 283 L685 306 Q612 341 539 306 Z' fill='#6c3a22' clip-path='url(#sphc)'/><path d='M539.94 283 A72.5 72.5 0 0 0 684.06 283' fill='none' stroke='#24140c' stroke-width='2.2'/><path d='M607 263.8 h10.5 M603 270 h19 M607 275.8 h10.5' stroke='#111' stroke-width='1.4'/><text x='597.5' y='273' font-family='Liberation Sans' font-size='7.5' font-weight='bold' fill='#111' text-anchor='middle'>10</text><text x='627' y='273' font-family='Liberation Sans' font-size='7.5' font-weight='bold' fill='#111' text-anchor='middle'>10</text><path d='M545 296.5 h136 M545 306 h136' stroke='#f0f0f0' stroke-width='1.3'/><path d='M612.3 282.5 L545 306 M612.3 282.5 L681 306 M612.3 282.5 L590 321.7 M612.3 282.5 L637 321.7 M612.3 282.5 L612.3 321' stroke='#f0f0f0' stroke-width='1.2'/><rect x='588' y='292' width='15' height='9' fill='#6c3a22'/><rect x='621' y='292' width='15' height='9' fill='#6c3a22'/><rect x='580' y='301.5' width='16' height='9' fill='#6c3a22'/><rect x='629' y='301.5' width='16' height='9' fill='#6c3a22'/><text x='596' y='299' font-family='Liberation Sans' font-size='7' font-weight='bold' fill='#f0f0f0' text-anchor='middle'>10</text><text x='629' y='299' font-family='Liberation Sans' font-size='7' font-weight='bold' fill='#f0f0f0' text-anchor='middle'>10</text><text x='587' y='308.8' font-family='Liberation Sans' font-size='7' font-weight='bold' fill='#f0f0f0' text-anchor='middle'>20</text><text x='638' y='308.8' font-family='Liberation Sans' font-size='7' font-weight='bold' fill='#f0f0f0' text-anchor='middle'>20</text><path d='M 596 292 C 604 296, 610 298, 611.3 304 C 614 298, 620 296, 628 292' stroke='#1e140c' stroke-width='3' fill='none'/><rect x='610.2' y='303' width='3' height='20' fill='#1e140c'/><path d='M 603 321.7 L 621.5 321.7 L 625.8 331.8 L 602 331.8 Z' fill='#1e140c'/><path d='M 565 286.2 L 597 286.2 L 599 291 M 660.5 286.2 L 628 286.2 L 626 291' stroke='#f0a018' stroke-width='3.6' fill='none' stroke-linecap='round' stroke-linejoin='round'/><circle cx='612.3' cy='286.5' r='2.4' fill='#f0a018'/><circle cx='612.3' cy='286.5' r='0.9' fill='#6c3a22'/><path d='M 575 337 Q 612 333.5 652.7 335' stroke='#d8d8d8' stroke-width='1.1' fill='none'/><path d='M 605.6 333 L 605.6 349 M 623.5 333 L 623.5 349' stroke='#c0c0c0' stroke-width='1'/><path d='M 607.8 349.7 L 607.8 344 Q 615 333 622.4 344 L 622.4 349.7 Z' fill='#d8d8d0'/><circle cx='612.3' cy='377.8' r='16' fill='#0a0a0a' stroke='#1c1a1c' stroke-width='1.8'/><path d='M607 362 h10' stroke='#707070' stroke-width='1.6'/><circle cx='582' cy='376.7' r='2.3' fill='#505050'/><circle cx='642.6' cy='376.7' r='2.3' fill='#505050'/><defs><path id='arcT' d='M 681 374.4 A 14 14 0 0 1 709 374.4'/><path id='arcB' d='M 674.8 374.4 A 20.2 20.2 0 0 0 715.2 374.4'/></defs><circle cx='695' cy='374.4' r='24.6' fill='#3a3a3a'/><circle cx='695' cy='374.4' r='23.4' fill='#120e14'/><text font-family='Liberation Sans' font-size='9.5' fill='#ececec' letter-spacing='1.2'><textPath href='#arcT' startOffset='50%' text-anchor='middle'>PULL</textPath></text><text x='694.5' y='378' font-family='Liberation Sans' font-size='9.5' fill='#ececec' text-anchor='middle'>FOR</text><text font-family='Liberation Sans' font-size='9.5' fill='#ececec' letter-spacing='0.6'><textPath href='#arcB' startOffset='50%' text-anchor='middle'>CAGING</textPath></text><defs><radialGradient id='altglare' cx='0.5' cy='0.5' r='0.5'><stop offset='0' stop-color='#8a8a8a' stop-opacity='0.95'/><stop offset='0.55' stop-color='#666' stop-opacity='0.6'/><stop offset='1' stop-color='#2e2e2e' stop-opacity='0'/></radialGradient><clipPath id='altface'><circle cx='868.5' cy='287' r='94'/></clipPath></defs><path d='M 764 334 C 756 340, 755 356, 759 364 L 768 390 C 782 402, 810 400, 822 388 L 836 366 L 800 338 Z' fill='#1c1618'/><circle cx='767.6' cy='353.8' r='9' fill='#262424'/><path d='M761 359 L774 348' stroke='#111' stroke-width='1'/><circle cx='779.9' cy='380.2' r='18.5' fill='#161414'/><circle cx='779.9' cy='380.2' r='17.5' fill='#2a2a2a'/><circle cx='868.5' cy='287' r='108' fill='#1e1a1a'/><circle cx='868.5' cy='287' r='94' fill='#2e2e2e'/><g clip-path='url(#altface)'><path d='M 793.2 297.6 L 790.0 294.9 L 788.0 291.9 L 786.4 288.8 L 785.0 285.5 L 784.0 282.2 L 783.1 278.8 L 782.5 275.3 L 782.1 271.8 L 781.9 268.2 L 782.0 264.6 L 782.3 261.1 L 782.8 257.5 L 783.5 253.9 L 784.4 250.4 L 785.6 247.0 L 786.9 243.6 L 788.4 240.3 L 790.2 237.1 L 792.1 234.0 L 794.2 231.0 L 796.5 228.2 L 799.0 225.5 L 801.6 222.9 L 804.3 220.5 L 807.2 218.3 L 810.2 216.3 L 813.3 214.4 L 816.5 212.7 L 819.8 211.3 L 823.2 210.0 L 826.6 209.0 L 830.0 208.2 L 833.5 207.6 L 837.1 207.2 L 840.6 207.1 L 844.1 207.2 L 847.6 207.6 L 851.0 208.3 L 854.5 209.4 L 857.9 211.7 L 857.9 211.7 L 855.5 215.0 L 853.1 217.3 L 850.7 219.4 L 848.5 221.5 L 846.3 223.4 L 844.2 225.4 L 842.2 227.3 L 840.3 229.2 L 838.5 231.1 L 836.7 233.0 L 835.0 234.9 L 833.3 236.8 L 831.7 238.6 L 830.1 240.5 L 828.6 242.3 L 827.1 244.1 L 825.6 246.0 L 824.2 247.8 L 822.8 249.6 L 821.4 251.5 L 820.0 253.3 L 818.6 255.2 L 817.2 257.1 L 815.9 259.0 L 814.5 261.0 L 813.2 262.9 L 811.8 265.0 L 810.5 267.0 L 809.2 269.1 L 807.8 271.3 L 806.5 273.5 L 805.2 275.8 L 803.9 278.2 L 802.6 280.7 L 801.3 283.2 L 800.0 285.8 L 798.7 288.5 L 797.3 291.4 L 795.7 294.3 L 793.2 297.6 Z' fill='#505050' filter='url(#blur3)'/><path d='M 792.5 284.3 L 791.2 281.9 L 790.4 279.5 L 789.7 277.0 L 789.2 274.4 L 788.8 271.9 L 788.6 269.3 L 788.5 266.7 L 788.5 264.1 L 788.7 261.5 L 789.0 258.8 L 789.4 256.3 L 790.0 253.7 L 790.7 251.1 L 791.5 248.6 L 792.5 246.1 L 793.5 243.7 L 794.7 241.3 L 796.0 239.0 L 797.5 236.8 L 799.0 234.6 L 800.7 232.6 L 802.4 230.6 L 804.3 228.7 L 806.2 226.9 L 808.3 225.2 L 810.4 223.6 L 812.6 222.1 L 814.8 220.7 L 817.1 219.5 L 819.5 218.3 L 821.9 217.3 L 824.4 216.5 L 826.9 215.7 L 829.4 215.1 L 832.0 214.6 L 834.6 214.2 L 837.1 214.0 L 839.7 214.0 L 842.3 214.1 L 845.0 214.7 L 845.0 214.7 L 843.3 216.8 L 841.6 218.6 L 839.9 220.3 L 838.2 222.0 L 836.6 223.7 L 835.0 225.3 L 833.5 227.0 L 832.0 228.6 L 830.6 230.3 L 829.2 231.9 L 827.8 233.5 L 826.5 235.2 L 825.2 236.8 L 823.9 238.4 L 822.7 240.0 L 821.4 241.5 L 820.2 243.1 L 819.0 244.7 L 817.8 246.3 L 816.6 247.9 L 815.4 249.5 L 814.2 251.1 L 813.0 252.7 L 811.8 254.3 L 810.6 255.9 L 809.5 257.6 L 808.3 259.2 L 807.1 260.9 L 805.9 262.7 L 804.7 264.4 L 803.5 266.2 L 802.4 268.0 L 801.2 269.9 L 800.0 271.8 L 798.8 273.8 L 797.7 275.8 L 796.5 277.8 L 795.3 280.0 L 794.1 282.1 L 792.5 284.3 Z' fill='#6a6a6a' filter='url(#blur3)'/><path d='M 795.1 267.3 L 795.0 265.8 L 795.0 264.2 L 795.0 262.6 L 795.1 261.0 L 795.2 259.4 L 795.4 257.8 L 795.6 256.2 L 795.8 254.7 L 796.2 253.1 L 796.5 251.5 L 797.0 250.0 L 797.4 248.4 L 798.0 246.9 L 798.6 245.4 L 799.3 243.9 L 800.0 242.5 L 800.8 241.1 L 801.6 239.7 L 802.5 238.4 L 803.4 237.1 L 804.5 235.8 L 805.5 234.6 L 806.6 233.4 L 807.8 232.3 L 809.0 231.3 L 810.2 230.2 L 811.5 229.3 L 812.8 228.4 L 814.2 227.5 L 815.6 226.7 L 817.0 225.9 L 818.5 225.2 L 819.9 224.5 L 821.4 223.9 L 822.9 223.4 L 824.4 222.8 L 825.9 222.4 L 827.4 221.9 L 829.0 221.5 L 830.5 221.2 L 830.5 221.2 L 829.5 222.3 L 828.4 223.5 L 827.5 224.7 L 826.5 225.9 L 825.6 227.1 L 824.7 228.3 L 823.8 229.5 L 822.9 230.7 L 822.0 231.9 L 821.2 233.0 L 820.4 234.2 L 819.5 235.4 L 818.7 236.6 L 817.9 237.7 L 817.1 238.8 L 816.3 240.0 L 815.4 241.1 L 814.6 242.2 L 813.8 243.3 L 813.0 244.4 L 812.1 245.5 L 811.3 246.6 L 810.4 247.6 L 809.5 248.7 L 808.7 249.8 L 807.8 250.9 L 806.9 252.0 L 806.0 253.1 L 805.1 254.2 L 804.1 255.3 L 803.2 256.4 L 802.3 257.5 L 801.4 258.7 L 800.4 259.8 L 799.5 261.0 L 798.6 262.2 L 797.7 263.5 L 796.8 264.7 L 795.9 266.0 L 795.1 267.3 Z' fill='#7e7e7e' filter='url(#blur3)'/></g><circle cx='868.5' cy='287' r='57' fill='#2a2a2a' stroke='#1a1616' stroke-width='1.5'/><line x1='868.5' y1='207.0' x2='868.5' y2='195.0' stroke='#e8e8e8' stroke-width='1.7'/><line x1='879.0' y1='203.7' x2='880.0' y2='195.7' stroke='#e8e8e8' stroke-width='1.7'/><line x1='889.4' y1='205.6' x2='891.4' y2='197.9' stroke='#e8e8e8' stroke-width='1.7'/><line x1='899.4' y1='208.9' x2='902.4' y2='201.5' stroke='#e8e8e8' stroke-width='1.7'/><line x1='909.0' y1='213.4' x2='912.8' y2='206.4' stroke='#e8e8e8' stroke-width='1.7'/><line x1='915.5' y1='222.3' x2='922.6' y2='212.6' stroke='#e8e8e8' stroke-width='1.7'/><line x1='926.0' y1='225.8' x2='931.5' y2='219.9' stroke='#e8e8e8' stroke-width='1.7'/><line x1='933.2' y1='233.5' x2='939.4' y2='228.4' stroke='#e8e8e8' stroke-width='1.7'/><line x1='939.4' y1='242.0' x2='946.2' y2='237.7' stroke='#e8e8e8' stroke-width='1.7'/><line x1='944.5' y1='251.2' x2='951.7' y2='247.8' stroke='#e8e8e8' stroke-width='1.7'/><line x1='944.6' y1='262.3' x2='956.0' y2='258.6' stroke='#e8e8e8' stroke-width='1.7'/><line x1='951.0' y1='271.3' x2='958.9' y2='269.8' stroke='#e8e8e8' stroke-width='1.7'/><line x1='952.3' y1='281.7' x2='960.3' y2='281.2' stroke='#e8e8e8' stroke-width='1.7'/><line x1='952.3' y1='292.3' x2='960.3' y2='292.8' stroke='#e8e8e8' stroke-width='1.7'/><line x1='951.0' y1='302.7' x2='958.9' y2='304.2' stroke='#e8e8e8' stroke-width='1.7'/><line x1='944.6' y1='311.7' x2='956.0' y2='315.4' stroke='#e8e8e8' stroke-width='1.7'/><line x1='944.5' y1='322.8' x2='951.7' y2='326.2' stroke='#e8e8e8' stroke-width='1.7'/><line x1='939.4' y1='332.0' x2='946.2' y2='336.3' stroke='#e8e8e8' stroke-width='1.7'/><line x1='933.2' y1='340.5' x2='939.4' y2='345.6' stroke='#e8e8e8' stroke-width='1.7'/><line x1='926.0' y1='348.2' x2='931.5' y2='354.1' stroke='#e8e8e8' stroke-width='1.7'/><line x1='915.5' y1='351.7' x2='922.6' y2='361.4' stroke='#e8e8e8' stroke-width='1.7'/><line x1='909.0' y1='360.6' x2='912.8' y2='367.6' stroke='#e8e8e8' stroke-width='1.7'/><line x1='899.4' y1='365.1' x2='902.4' y2='372.5' stroke='#e8e8e8' stroke-width='1.7'/><line x1='889.4' y1='368.4' x2='891.4' y2='376.1' stroke='#e8e8e8' stroke-width='1.7'/><line x1='879.0' y1='370.3' x2='880.0' y2='378.3' stroke='#e8e8e8' stroke-width='1.7'/><line x1='868.5' y1='367.0' x2='868.5' y2='379.0' stroke='#e8e8e8' stroke-width='1.7'/><line x1='858.0' y1='370.3' x2='857.0' y2='378.3' stroke='#e8e8e8' stroke-width='1.7'/><line x1='847.6' y1='368.4' x2='845.6' y2='376.1' stroke='#e8e8e8' stroke-width='1.7'/><line x1='837.6' y1='365.1' x2='834.6' y2='372.5' stroke='#e8e8e8' stroke-width='1.7'/><line x1='828.0' y1='360.6' x2='824.2' y2='367.6' stroke='#e8e8e8' stroke-width='1.7'/><line x1='821.5' y1='351.7' x2='814.4' y2='361.4' stroke='#e8e8e8' stroke-width='1.7'/><line x1='811.0' y1='348.2' x2='805.5' y2='354.1' stroke='#e8e8e8' stroke-width='1.7'/><line x1='803.8' y1='340.5' x2='797.6' y2='345.6' stroke='#e8e8e8' stroke-width='1.7'/><line x1='797.6' y1='332.0' x2='790.8' y2='336.3' stroke='#e8e8e8' stroke-width='1.7'/><line x1='792.5' y1='322.8' x2='785.3' y2='326.2' stroke='#e8e8e8' stroke-width='1.7'/><line x1='792.4' y1='311.7' x2='781.0' y2='315.4' stroke='#e8e8e8' stroke-width='1.7'/><line x1='786.0' y1='302.7' x2='778.1' y2='304.2' stroke='#e8e8e8' stroke-width='1.7'/><line x1='784.7' y1='292.3' x2='776.7' y2='292.8' stroke='#e8e8e8' stroke-width='1.7'/><line x1='784.7' y1='281.7' x2='776.7' y2='281.2' stroke='#e8e8e8' stroke-width='1.7'/><line x1='786.0' y1='271.3' x2='778.1' y2='269.8' stroke='#e8e8e8' stroke-width='1.7'/><line x1='792.4' y1='262.3' x2='781.0' y2='258.6' stroke='#e8e8e8' stroke-width='1.7'/><line x1='792.5' y1='251.2' x2='785.3' y2='247.8' stroke='#e8e8e8' stroke-width='1.7'/><line x1='797.6' y1='242.0' x2='790.8' y2='237.7' stroke='#e8e8e8' stroke-width='1.7'/><line x1='803.8' y1='233.5' x2='797.6' y2='228.4' stroke='#e8e8e8' stroke-width='1.7'/><line x1='811.0' y1='225.8' x2='805.5' y2='219.9' stroke='#e8e8e8' stroke-width='1.7'/><line x1='821.5' y1='222.3' x2='814.4' y2='212.6' stroke='#e8e8e8' stroke-width='1.7'/><line x1='828.0' y1='213.4' x2='824.2' y2='206.4' stroke='#e8e8e8' stroke-width='1.7'/><line x1='837.6' y1='208.9' x2='834.6' y2='201.5' stroke='#e8e8e8' stroke-width='1.7'/><line x1='847.6' y1='205.6' x2='845.6' y2='197.9' stroke='#e8e8e8' stroke-width='1.7'/><line x1='858.0' y1='203.7' x2='857.0' y2='195.7' stroke='#e8e8e8' stroke-width='1.7'/><text x='868.5' y='223.3' font-family='Liberation Sans' font-size='20' fill='#f0f0f0' text-anchor='middle'>0</text><text x='910.2' y='236.9' font-family='Liberation Sans' font-size='20' fill='#f0f0f0' text-anchor='middle'>1</text><text x='936.0' y='272.4' font-family='Liberation Sans' font-size='20' fill='#f0f0f0' text-anchor='middle'>2</text><text x='936.0' y='316.2' font-family='Liberation Sans' font-size='20' fill='#f0f0f0' text-anchor='middle'>3</text><text x='910.2' y='351.7' font-family='Liberation Sans' font-size='20' fill='#f0f0f0' text-anchor='middle'>4</text><text x='868.5' y='365.3' font-family='Liberation Sans' font-size='20' fill='#f0f0f0' text-anchor='middle'>5</text><text x='826.8' y='351.7' font-family='Liberation Sans' font-size='20' fill='#f0f0f0' text-anchor='middle'>6</text><text x='801.0' y='316.2' font-family='Liberation Sans' font-size='20' fill='#f0f0f0' text-anchor='middle'>7</text><text x='801.0' y='272.4' font-family='Liberation Sans' font-size='20' fill='#f0f0f0' text-anchor='middle'>8</text><text x='826.8' y='236.9' font-family='Liberation Sans' font-size='20' fill='#f0f0f0' text-anchor='middle'>9</text><path d='M862.7 193.3 L876.7 193.3 L869 204 Z' fill='#f0f0f0'/><rect x='868.2' y='200' width='1.4' height='45' fill='#e8e8e8'/><text x='848' y='213' font-family='Liberation Sans' font-size='6.5' fill='#bbb' text-anchor='middle' transform='rotate(-22 848 213)'>100</text><text x='890' y='212' font-family='Liberation Sans' font-size='7.5' font-weight='bold' fill='#ccc' text-anchor='middle' transform='rotate(14 890 212)'>FEET</text><text x='843.5' y='270.5' font-family='Liberation Sans' font-size='16' font-weight='bold' fill='#eeeeee' text-anchor='middle' letter-spacing='0.6'>ALT</text><text x='841' y='282.5' font-family='Liberation Sans' font-size='8.8' font-weight='bold' fill='#e0e0e0' text-anchor='middle'>ENCODED</text><text x='902' y='261.5' font-family='Liberation Sans' font-size='7.5' font-weight='bold' fill='#e0e0e0' text-anchor='middle'>MAX.</text><text x='902' y='269.3' font-family='Liberation Sans' font-size='7.5' font-weight='bold' fill='#e0e0e0' text-anchor='middle'>RANGE</text><text x='902' y='277.2' font-family='Liberation Sans' font-size='7.5' font-weight='bold' fill='#e0e0e0' text-anchor='middle'>20,000</text><rect x='929' y='273.6' width='17' height='27' fill='#141414'/><rect x='946' y='273' width='4' height='28' fill='#222'/><path d='M946 276 h3 M946 279 h3 M946 282 h3 M946 285 h3 M946 288 h3 M946 291 h3 M946 294 h3 M946 297 h3' stroke='#999' stroke-width='0.6'/><text x='937.5' y='282' font-family='Liberation Sans' font-size='9.5' font-weight='bold' fill='#f0f0f0' text-anchor='middle' letter-spacing='-0.6'>284</text><text x='937.5' y='291' font-family='Liberation Sans' font-size='9.5' font-weight='bold' fill='#f0f0f0' text-anchor='middle' letter-spacing='-0.6'>285</text><text x='937.5' y='300' font-family='Liberation Sans' font-size='9.5' font-weight='bold' fill='#f0f0f0' text-anchor='middle' letter-spacing='-0.6'>286</text><rect x='954.5' y='285.6' width='7' height='2.6' fill='#f0f0f0'/><defs><clipPath id='hatch'><path d='M 843.2 336.2 L 859 309.9 L 883.6 313.4 L 896 336.2 C 885 344, 855 344, 843.2 336.2 Z'/></clipPath></defs><g clip-path='url(#hatch)'><rect x='840' y='305' width='60' height='42' fill='#ebe4e6'/><path d='M 840 318 L 870 348 M 848 312 L 882 346 M 856 306 L 892 342 M 866 302 L 900 336' stroke='#262626' stroke-width='2'/></g><path d='M 855.5 302.9 L 862 282 L 876 282 L 876.6 299.3 L 866 312 Z' fill='#1a1a1a'/><circle cx='871.3' cy='287' r='6' fill='#333'/><path d='M 868 244 L 882.8 240.6 L 883.6 260.4 L 873 275.3 L 868 273.6 Z' fill='#f0f0f0'/><rect x='867' y='243.8' width='5.3' height='31.5' fill='#f4f4f4'/><path d='M 870.5 299.5 L 875.5 297.5 L 902.5 366 L 903 372 L 899.5 367.5 Z' fill='#f0f0f0'/></g><g stroke='#6a6a6a' stroke-width='1' stroke-dasharray='1 2'><line x1='351.5' y1='134' x2='351.5' y2='458'/><line x1='612.5' y1='134' x2='612.5' y2='458'/><line x1='869' y1='134' x2='869' y2='458'/><line x1='213' y1='288.5' x2='1003' y2='288.5'/></g></svg><div class='a' style='left:207px;top:477px;width:815px;height:1px;background:#000'></div><div class='a' style='left:209px;top:479px;width:812px;height:2px;background:#000'></div><div class='a' style='left:207px;top:477px;width:1px;height:259px;background:#000'></div><div class='a' style='left:209px;top:479px;width:2px;height:253px;background:#000'></div><div class='a' style='left:211px;top:481px;width:808px;height:250px;background:#fff;border-bottom:1px solid #b0b0b0'></div><div class='a' style='left:211px;top:493px;width:806px;height:16px;background:#e2f2dc;border-bottom:1px solid #c8d0c8'></div><div class='a' style='left:211px;top:481px;width:132px;height:12px;border-radius:5px;background:linear-gradient(180deg,#f0f0f0,#dedede 60%,#d0d0d0);border-right:1px solid #888;border-bottom:1px solid #777'></div><div class='t' style='left:212px;top:483px;font-size:9px;letter-spacing:-0.1px'>Owner</div><div class='a' style='left:344px;top:493px;width:1px;height:16px;background:#b8c0b8'></div><div class='t' style='left:212px;top:497px;font-size:9px;letter-spacing:-0.1px'>Sample Workplan</div><div class='a' style='left:345px;top:481px;width:132px;height:12px;border-radius:5px;background:linear-gradient(180deg,#f0f0f0,#dedede 60%,#d0d0d0);border-right:1px solid #888;border-bottom:1px solid #777'></div><div class='t' style='left:346px;top:483px;font-size:9px;letter-spacing:-0.1px'>Aircraft ID</div><div class='a' style='left:478px;top:493px;width:1px;height:16px;background:#b8c0b8'></div><div class='t' style='left:346px;top:497px;font-size:9px;letter-spacing:-0.1px'>1234</div><div class='a' style='left:479px;top:481px;width:132px;height:12px;border-radius:5px;background:linear-gradient(180deg,#f0f0f0,#dedede 60%,#d0d0d0);border-right:1px solid #888;border-bottom:1px solid #777'></div><div class='t' style='left:480px;top:483px;font-size:9px;letter-spacing:-0.1px'>Aircraft Type</div><div class='a' style='left:612px;top:493px;width:1px;height:16px;background:#b8c0b8'></div><div class='t' style='left:480px;top:497px;font-size:9px;letter-spacing:-0.1px'>XL</div><div class='a' style='left:613px;top:481px;width:132px;height:12px;border-radius:5px;background:linear-gradient(180deg,#f0f0f0,#dedede 60%,#d0d0d0);border-right:1px solid #888;border-bottom:1px solid #777'></div><div class='t' style='left:614px;top:483px;font-size:9px;letter-spacing:-0.1px'>Cost</div><div class='a' style='left:746px;top:493px;width:1px;height:16px;background:#b8c0b8'></div><div class='t' style='left:614px;top:497px;font-size:9px;letter-spacing:-0.1px'>0</div><div class='a' style='left:747px;top:481px;width:132px;height:12px;border-radius:5px;background:linear-gradient(180deg,#f0f0f0,#dedede 60%,#d0d0d0);border-right:1px solid #888;border-bottom:1px solid #777'></div><div class='t' style='left:748px;top:483px;font-size:9px;letter-spacing:-0.1px'>Weight</div><div class='a' style='left:880px;top:493px;width:1px;height:16px;background:#b8c0b8'></div><div class='t' style='left:748px;top:497px;font-size:9px;letter-spacing:-0.1px'>0</div><div class='a' style='left:881px;top:481px;width:134px;height:12px;border-radius:5px;background:linear-gradient(180deg,#f0f0f0,#dedede 60%,#d0d0d0);border-right:1px solid #888;border-bottom:1px solid #777'></div><div class='t' style='left:882px;top:483px;font-size:9px;letter-spacing:-0.1px'>Amps</div><div class='a' style='left:1016px;top:493px;width:1px;height:16px;background:#b8c0b8'></div><div class='t' style='left:882px;top:497px;font-size:9px;letter-spacing:-0.1px'>0</div><div class='a' style='left:207px;top:734px;width:814px;height:2px;background:#000'></div><svg class='a' style='left:210px;top:510px' width='30' height='15'><path d='M0.5 14 L0.5 6 C1 3,4 2,10 2 L10 14 Z M20 2 C26 2,29 3,29.5 6 L29.5 14 L20 14 Z' fill='#f4eec4' stroke='#403820'/><rect x='10' y='0.5' width='10' height='14' fill='#d8d0b0' stroke='#403820'/><path d='M22 4 C25 4,27 6,27 9' stroke='#c06060' fill='none'/></svg><div class='t' style='left:243px;top:512px;font-size:11px;letter-spacing:-0.25px'>PanelImage</div><svg class='a' style='left:210px;top:525px' width='30' height='15'><path d='M0.5 14 L0.5 6 C1 3,4 2,10 2 L10 14 Z M20 2 C26 2,29 3,29.5 6 L29.5 14 L20 14 Z' fill='#f4eec4' stroke='#403820'/><rect x='10' y='0.5' width='10' height='14' fill='#d8d0b0' stroke='#403820'/><path d='M22 4 C25 4,27 6,27 9' stroke='#c06060' fill='none'/></svg><div class='t' style='left:243px;top:527px;font-size:11px;letter-spacing:-0.1px'>InstrumentPanel</div><svg class='a' style='left:210px;top:541px' width='20' height='18'><rect x='0.5' y='0.5' width='19' height='17' fill='#ece6c0' stroke='#222'/><path d='M3 4 h14 M3 9 h14 M3 14 h14 M6 2 v14 M10 2 v14 M14 2 v14' stroke='#333' stroke-dasharray='1.5 1.5'/></svg><div class='t' style='left:233px;top:545px;font-size:11px;letter-spacing:-0.18px'>CanvasTools</div><div class='a stripe' style='left:675px;top:510px;width:343px;height:221px;border:1px solid #7060a8;border-width:1px 2px 2px 1px'></div><div class='a' style='left:697px;top:519px;width:299px;height:179px;border:1px solid #000;border-width:1px 2px 2px 1px'></div><div class='a' style='left:699px;top:521px;width:74px;height:50px;border:1px solid #c0c0c0'></div><div class='a' style='left:774px;top:521px;width:219px;height:50px;border:1px solid #c0c0c0'></div><div class='t' style='left:701px;top:526px;font-size:9.5px;letter-spacing:0.35px;color:#222'>Item:</div><div class='t' style='left:701px;top:542px;font-size:9.5px;letter-spacing:0.35px;color:#222'>Type:</div><div class='t' style='left:701px;top:558px;font-size:9.5px;letter-spacing:0.35px;color:#222'>Manufacturer:</div><div class='t' style='left:699px;top:575px;font-size:9.5px;letter-spacing:0.35px;color:#222'>User Modified: No</div><div class='a' style='left:895px;top:573px;width:97px;height:13px;border-radius:5px;background:linear-gradient(180deg,#f4f4f4,#e0e0e0);border:1px solid #c0c0c0;border-right:1px solid #888;border-bottom:1px solid #888'></div><div class='t' style='left:933px;top:574px;font-size:9.5px;color:#c8c8c8'>Edit</div><div class='a' style='left:765px;top:592px;width:65px;height:16px;border:1px solid #a0a0a0;border-bottom:none;border-radius:5px 5px 0 0;background:linear-gradient(180deg,#fff,#f0f0f0)'></div><div class='t' style='left:769px;top:596px;font-size:10px;letter-spacing:-0.1px'>Description</div><div class='a' style='left:832px;top:593px;width:37px;height:15px;border:1px solid #a0a0a0;border-bottom:none;border-radius:5px 5px 0 0;background:linear-gradient(180deg,#fff,#f0f0f0)'></div><div class='t' style='left:837px;top:596px;font-size:10px'>Notes</div><div class='a' style='left:698px;top:608px;width:296px;height:89px;border:1px solid #84c4ec;background:#fbfbfb'></div><div class='a' style='left:698px;top:590px;width:66px;height:19px;border:2px solid #4858b0;border-bottom:none;border-radius:7px 7px 0 0;background:linear-gradient(180deg,#a0b4e8 0%,#bccdf0 40%,#d4e4f8 75%,#e4f0fc 100%)'></div><div class='t' style='left:703px;top:594px;font-size:10.5px;letter-spacing:-0.1px'>Propierties</div><div class='a' style='left:700px;top:611px;width:95px;height:82px;border:1px solid #b8b8b8'></div><div class='a' style='left:797px;top:611px;width:96px;height:82px;border:1px solid #b8b8b8;background:#a898c8'></div><div class='a' style='left:798px;top:612px;width:94px;height:13px;background:#d8d0e8'></div><div class='a' style='left:895px;top:611px;width:96px;height:82px;border:1px solid #b8b8b8'></div><div class='t' style='left:702px;top:614px;font-size:9.5px;letter-spacing:0.35px;color:#222'>Item</div><div class='t' style='left:799px;top:614px;font-size:9.5px;letter-spacing:0.35px;color:#222'>Template</div><div class='t' style='left:897px;top:614px;font-size:9.5px;letter-spacing:0.35px;color:#222'>Propierties</div><div class='a' style='left:700px;top:626px;width:40px;height:14px;border:1px solid #c0c0c0'></div><div class='t' style='left:702px;top:629px;font-size:9.5px;letter-spacing:0.35px;color:#222'>X:</div><div class='a' style='left:798px;top:626px;width:40px;height:14px;border:1px solid #e0d8f0;background:#9c8cc0'></div><div class='t' style='left:800px;top:629px;font-size:9.5px;letter-spacing:0.35px;color:#222'>X:</div><div class='a' style='left:700px;top:642px;width:40px;height:14px;border:1px solid #c0c0c0'></div><div class='t' style='left:702px;top:645px;font-size:9.5px;letter-spacing:0.35px;color:#222'>Y:</div><div class='a' style='left:798px;top:642px;width:40px;height:14px;border:1px solid #e0d8f0;background:#9c8cc0'></div><div class='t' style='left:800px;top:645px;font-size:9.5px;letter-spacing:0.35px;color:#222'>Y:</div><div class='a' style='left:700px;top:658px;width:40px;height:14px;border:1px solid #c0c0c0'></div><div class='t' style='left:702px;top:661px;font-size:9.5px;letter-spacing:0.35px;color:#222'>Height:</div><div class='a' style='left:798px;top:658px;width:40px;height:14px;border:1px solid #e0d8f0;background:#9c8cc0'></div><div class='t' style='left:800px;top:661px;font-size:9.5px;letter-spacing:0.35px;color:#222'>Height:</div><div class='a' style='left:700px;top:674px;width:40px;height:14px;border:1px solid #c0c0c0'></div><div class='t' style='left:702px;top:677px;font-size:9.5px;letter-spacing:0.35px;color:#222'>Width:</div><div class='a' style='left:798px;top:674px;width:40px;height:14px;border:1px solid #e0d8f0;background:#9c8cc0'></div><div class='t' style='left:800px;top:677px;font-size:9.5px;letter-spacing:0.35px;color:#222'>Width:</div><div class='a' style='left:897px;top:626px;width:39px;height:14px;border:1px solid #c0c0c0'></div><div class='t' style='left:899px;top:629px;font-size:9.5px;letter-spacing:0.35px;color:#222'>Depth:</div><div class='a' style='left:897px;top:642px;width:39px;height:14px;border:1px solid #c0c0c0'></div><div class='t' style='left:899px;top:645px;font-size:9.5px;letter-spacing:0.35px;color:#222'>Amps:</div><div class='a' style='left:897px;top:658px;width:39px;height:14px;border:1px solid #c0c0c0'></div><div class='t' style='left:899px;top:661px;font-size:9.5px;letter-spacing:0.35px;color:#222'>Weight:</div><div class='a' style='left:897px;top:674px;width:39px;height:14px;border:1px solid #c0c0c0'></div><div class='t' style='left:899px;top:677px;font-size:9.5px;letter-spacing:0.35px;color:#222'>Price:</div><div class='a' style='left:741px;top:626px;width:52px;height:14px;background:#eef2f2;border-top:2px solid #000;border-left:2px solid #000;border-right:1px solid #ddd;border-bottom:1px solid #ddd'></div><div class='a' style='left:741px;top:642px;width:52px;height:14px;background:#eef2f2;border-top:2px solid #000;border-left:2px solid #000;border-right:1px solid #ddd;border-bottom:1px solid #ddd'></div><div class='a' style='left:0;top:737px;width:1024px;height:5px;background:#fff'></div><div class='a' style='left:0;top:737px;width:95px;height:5px;background:linear-gradient(180deg,#40a040,#e8f8e8);border-top:1px solid #308030;border-radius:0 4px 0 0'></div><div class='a' style='left:95px;top:738px;width:818px;height:4px;background:#e8e6f0;border-top:1px solid #9890b0'></div><div class='a' style='left:232px;top:739px;width:1px;height:3px;background:#555'></div><div class='a' style='left:390px;top:739px;width:1px;height:3px;background:#555'></div><div class='a' style='left:551px;top:739px;width:1px;height:3px;background:#555'></div><div class='a' style='left:712px;top:739px;width:1px;height:3px;background:#555'></div><div class='a' style='left:870px;top:739px;width:1px;height:3px;background:#555'></div></body></html>
